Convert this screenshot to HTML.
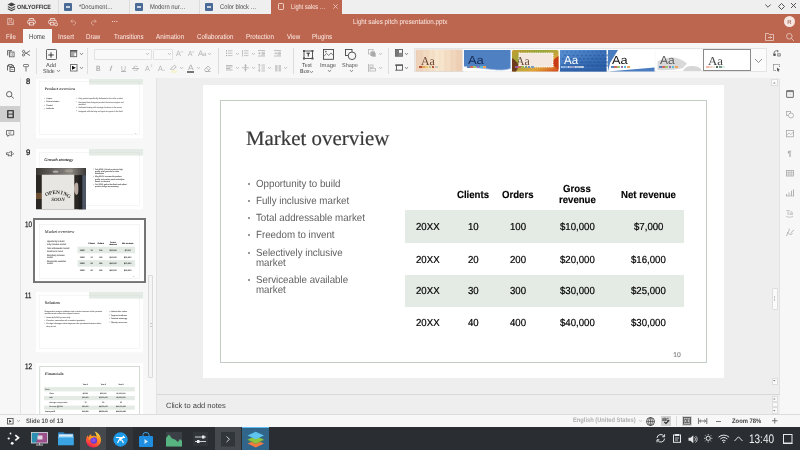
<!DOCTYPE html><html><head><meta charset="utf-8"><style>*{margin:0;padding:0;box-sizing:border-box}
html,body{width:800px;height:450px;overflow:hidden;background:#eee;font-family:"Liberation Sans",sans-serif;text-rendering:geometricPrecision}
.a{position:absolute}
.t{white-space:nowrap}
svg{position:absolute;overflow:visible}
.thumb .t{-webkit-text-stroke:0.4px currentColor}
</style></head><body><div class="a" style="left:0;top:0;width:800px;height:450px;will-change:transform;overflow:hidden">
<div class="a" style="left:0px;top:0px;width:800px;height:14px;background:#efefef"></div>
<div class="a" style="left:0px;top:14px;width:800px;height:29px;background:#bd664f"></div>
<div class="a" style="left:0px;top:43px;width:800px;height:35px;background:#f7f7f7"></div>
<div class="a" style="left:0px;top:78px;width:800px;height:1px;background:#e0e0e0"></div>
<div class="a" style="left:0px;top:78px;width:20px;height:336px;background:#f7f7f7"></div>
<div class="a" style="left:20px;top:79px;width:1px;height:335px;background:#e2e2e2"></div>
<div class="a" style="left:21px;top:78px;width:135px;height:336px;background:#f7f7f7"></div>
<div class="a" style="left:156px;top:79px;width:1px;height:335px;background:#e2e2e2"></div>
<div class="a" style="left:157px;top:78px;width:623px;height:316px;background:#eeeeee"></div>
<div class="a" style="left:780px;top:78px;width:20px;height:336px;background:#f7f7f7"></div>
<div class="a" style="left:779px;top:79px;width:1px;height:335px;background:#e2e2e2"></div>
<div class="a" style="left:157px;top:394px;width:623px;height:20px;background:#eeeeee"></div>
<div class="a" style="left:157px;top:394px;width:623px;height:1px;background:#d8d8d8"></div>
<div class="a" style="left:0px;top:414px;width:800px;height:13px;background:#f7f7f7"></div>
<div class="a" style="left:0px;top:414px;width:800px;height:1px;background:#dcdcdc"></div>
<div class="a" style="left:0px;top:427px;width:800px;height:23px;background:#2a2d31"></div>
<svg style="left:7px;top:2px;" width="9" height="10" viewBox="0 0 9 10"><path d="M4.5 0.5 L8.5 2.5 L4.5 4.5 L0.5 2.5Z" fill="#444"/><path d="M0.8 4.6 L4.5 6.4 L8.2 4.6" fill="none" stroke="#444" stroke-width="1.1"/><path d="M0.8 6.8 L4.5 8.6 L8.2 6.8" fill="none" stroke="#444" stroke-width="1.1"/></svg>
<div class="a t" style="left:16.50px;top:5.23px;font-size:6.2px;line-height:6.2px;font-family:'Liberation Sans',sans-serif;color:#333;font-weight:bold;transform:scaleX(0.863);transform-origin:0 0;">ONLYOFFICE</div>
<div class="a" style="left:58px;top:0px;width:1px;height:14px;background:#dcdcdc"></div>
<div class="a" style="left:64px;top:3px;width:8px;height:8px;background:#4a6b95;border-radius:1px"></div>
<div class="a" style="left:66px;top:5.6px;width:4px;height:0.8px;background:#c9d5e4"></div>
<div class="a" style="left:66px;top:7.4px;width:4px;height:0.8px;background:#c9d5e4"></div>
<div class="a t" style="left:78.50px;top:5.22px;font-size:6.8px;line-height:6.8px;font-family:'Liberation Sans',sans-serif;color:#4a4a4a;transform:scaleX(0.835);transform-origin:0 0;">*Document…</div>
<div class="a" style="left:129px;top:0px;width:1px;height:14px;background:#dcdcdc"></div>
<div class="a" style="left:135px;top:3px;width:8px;height:8px;background:#4a6b95;border-radius:1px"></div>
<div class="a" style="left:137px;top:5.6px;width:4px;height:0.8px;background:#c9d5e4"></div>
<div class="a" style="left:137px;top:7.4px;width:4px;height:0.8px;background:#c9d5e4"></div>
<div class="a t" style="left:149.50px;top:5.22px;font-size:6.8px;line-height:6.8px;font-family:'Liberation Sans',sans-serif;color:#4a4a4a;transform:scaleX(0.854);transform-origin:0 0;">Modern nur…</div>
<div class="a" style="left:199px;top:0px;width:1px;height:14px;background:#dcdcdc"></div>
<div class="a" style="left:205px;top:3px;width:8px;height:8px;background:#4a6b95;border-radius:1px"></div>
<div class="a" style="left:207px;top:5.6px;width:4px;height:0.8px;background:#c9d5e4"></div>
<div class="a" style="left:207px;top:7.4px;width:4px;height:0.8px;background:#c9d5e4"></div>
<div class="a t" style="left:219.50px;top:5.22px;font-size:6.8px;line-height:6.8px;font-family:'Liberation Sans',sans-serif;color:#4a4a4a;transform:scaleX(0.849);transform-origin:0 0;">Color block …</div>
<div class="a" style="left:271px;top:0px;width:71px;height:14px;background:#bd664f"></div>
<div class="a" style="left:277.6px;top:3.4px;width:6.6px;height:6.2px;border:0.8px solid #f0cfc6;border-radius:1.2px"></div>
<div class="a t" style="left:290.50px;top:5.22px;font-size:6.8px;line-height:6.8px;font-family:'Liberation Sans',sans-serif;color:#fbeae5;transform:scaleX(0.837);transform-origin:0 0;">Light sales …</div>
<svg style="left:332.5px;top:3.5px;" width="5" height="5" viewBox="0 0 5 5"><path d="M0.3 0.3L4.7 4.7M4.7 0.3L0.3 4.7" stroke="#f0cfc6" stroke-width="0.75"/></svg>
<svg style="left:765px;top:4px;" width="6" height="4" viewBox="0 0 6 4"><path d="M0.3 0.5L3 3.2L5.7 0.5" fill="none" stroke="#444" stroke-width="0.9"/></svg>
<svg style="left:778px;top:2.5px;" width="7" height="7" viewBox="0 0 7 7"><path d="M3.5 0.5L6.5 3.5L3.5 6.5L0.5 3.5Z" fill="none" stroke="#444" stroke-width="0.9"/></svg>
<svg style="left:791px;top:3px;" width="5" height="5" viewBox="0 0 5 5"><path d="M0 0L5 5M5 0L0 5" stroke="#444" stroke-width="0.9"/></svg>
<svg style="left:7px;top:18px;opacity:.45" width="7" height="7" viewBox="0 0 7 7"><path d="M0.5 0.5H5L6.5 2V6.5H0.5Z M2 0.5V2.3H4.5V0.5 M1.8 6.5V4H5.2V6.5" fill="none" stroke="#fff" stroke-width="0.9"/></svg>
<svg style="left:27px;top:18px;opacity:.8" width="9" height="7.5" viewBox="0 0 9 7.5"><path d="M2.3 2.3V0.5H6.7V2.3" fill="none" stroke="#fff" stroke-width="0.85"/><rect x="0.5" y="2.3" width="8" height="3.6" rx="1.7" fill="none" stroke="#fff" stroke-width="0.85"/><rect x="2.5" y="4.3" width="4" height="2.7" fill="#bd664f" stroke="#fff" stroke-width="0.85"/></svg>
<svg style="left:48px;top:18px;opacity:.8" width="10" height="8" viewBox="0 0 10 8"><path d="M2.3 2.3V0.5H6.7V2.3" fill="none" stroke="#fff" stroke-width="0.85"/><path d="M5.5 5.9H2Q0.5 5.9 0.5 4.3V3.9Q0.5 2.3 2 2.3H7Q8.5 2.3 8.5 3.9" fill="none" stroke="#fff" stroke-width="0.85"/><rect x="2.5" y="4.3" width="3.3" height="2.7" fill="#bd664f" stroke="#fff" stroke-width="0.85"/><circle cx="8" cy="6.3" r="1.5" fill="#bd664f" stroke="#fff" stroke-width="0.85"/></svg>
<svg style="left:70px;top:19px;opacity:.4" width="7" height="6" viewBox="0 0 7 6"><path d="M2.5 0.5L0.8 2.2L2.5 3.9 M0.8 2.2H4.5A2 2 0 0 1 4.5 5.8H3" fill="none" stroke="#fff" stroke-width="0.9"/></svg>
<svg style="left:90px;top:19px;opacity:.4" width="7" height="6" viewBox="0 0 7 6"><path d="M4.5 0.5L6.2 2.2L4.5 3.9 M6.2 2.2H2.5A2 2 0 0 0 2.5 5.8H4" fill="none" stroke="#fff" stroke-width="0.9"/></svg>
<div class="a" style="left:112px;top:20.8px;width:1.2px;height:1.2px;background:#f6ddd6;box-shadow:2.2px 0 0 #f6ddd6,4.4px 0 0 #f6ddd6"></div>
<div class="a t" style="left:352.70px;top:17.98px;font-size:7.2px;line-height:7.2px;font-family:'Liberation Sans',sans-serif;color:#fbeae5;transform:scaleX(0.868);transform-origin:0 0;">Light sales pitch presentation.pptx</div>
<div class="a" style="left:784px;top:16px;width:11px;height:11px;border-radius:50%;background:#f7e6e1"></div>
<div class="a t" style="left:787.33px;top:19.60px;font-size:6px;line-height:6px;font-family:'Liberation Sans',sans-serif;color:#8a4a3a;">R</div>
<div class="a" style="left:22.5px;top:29px;width:29.5px;height:14px;background:#f7f7f7"></div>
<div class="a t" style="left:6.30px;top:33.08px;font-size:7.2px;line-height:7.2px;font-family:'Liberation Sans',sans-serif;color:#fbeae5;transform:scaleX(0.853);transform-origin:0 0;">File</div>
<div class="a t" style="left:28.80px;top:33.08px;font-size:7.2px;line-height:7.2px;font-family:'Liberation Sans',sans-serif;color:#444;transform:scaleX(0.843);transform-origin:0 0;">Home</div>
<div class="a t" style="left:57.70px;top:33.08px;font-size:7.2px;line-height:7.2px;font-family:'Liberation Sans',sans-serif;color:#fbeae5;transform:scaleX(0.894);transform-origin:0 0;">Insert</div>
<div class="a t" style="left:85.80px;top:33.08px;font-size:7.2px;line-height:7.2px;font-family:'Liberation Sans',sans-serif;color:#fbeae5;transform:scaleX(0.851);transform-origin:0 0;">Draw</div>
<div class="a t" style="left:113.70px;top:33.08px;font-size:7.2px;line-height:7.2px;font-family:'Liberation Sans',sans-serif;color:#fbeae5;transform:scaleX(0.847);transform-origin:0 0;">Transitions</div>
<div class="a t" style="left:155.70px;top:33.08px;font-size:7.2px;line-height:7.2px;font-family:'Liberation Sans',sans-serif;color:#fbeae5;transform:scaleX(0.881);transform-origin:0 0;">Animation</div>
<div class="a t" style="left:196.70px;top:33.08px;font-size:7.2px;line-height:7.2px;font-family:'Liberation Sans',sans-serif;color:#fbeae5;transform:scaleX(0.860);transform-origin:0 0;">Collaboration</div>
<div class="a t" style="left:245.70px;top:33.08px;font-size:7.2px;line-height:7.2px;font-family:'Liberation Sans',sans-serif;color:#fbeae5;transform:scaleX(0.864);transform-origin:0 0;">Protection</div>
<div class="a t" style="left:286.50px;top:33.08px;font-size:7.2px;line-height:7.2px;font-family:'Liberation Sans',sans-serif;color:#fbeae5;transform:scaleX(0.853);transform-origin:0 0;">View</div>
<div class="a t" style="left:312.40px;top:33.08px;font-size:7.2px;line-height:7.2px;font-family:'Liberation Sans',sans-serif;color:#fbeae5;transform:scaleX(0.855);transform-origin:0 0;">Plugins</div>
<svg style="left:765px;top:32.5px;opacity:.6" width="9" height="8" viewBox="0 0 9 8"><path d="M0.5 0.5H3.5L4.3 1.5H8.5V7.5H0.5Z M3 4.5H6.5 M5.3 3.3L6.5 4.5L5.3 5.7" fill="none" stroke="#fff" stroke-width="0.9"/></svg>
<svg style="left:786px;top:32.5px;opacity:.6" width="9" height="8" viewBox="0 0 9 8"><circle cx="3.3" cy="3.3" r="2.8" fill="none" stroke="#fff" stroke-width="0.9"/><path d="M5.3 5.3L8 8" stroke="#fff" stroke-width="0.9"/></svg>
<svg style="left:7px;top:50px;" width="7.5" height="7.2" viewBox="0 0 7.5 7.2"><path d="M0.5 5.5V0.5H5" fill="none" stroke="#666" stroke-width="0.9"/><path d="M2 0.5V5.5M3.5 0.5V2" stroke="#888" stroke-width="0.6"/><rect x="2.5" y="2" width="4.6" height="4.8" fill="#f7f7f7" stroke="#666" stroke-width="0.9"/><path d="M4 2.3V6.6M5.5 2.3V6.6" stroke="#999" stroke-width="0.7"/></svg>
<svg style="left:22px;top:50.3px;" width="8.2" height="6.4" viewBox="0 0 8.2 6.4"><circle cx="1.5" cy="1.4" r="1.1" fill="none" stroke="#555" stroke-width="0.8"/><circle cx="1.5" cy="5" r="1.1" fill="none" stroke="#555" stroke-width="0.8"/><path d="M2.4 2.1L8 5.6M2.4 4.3L8 0.8" stroke="#555" stroke-width="0.8"/></svg>
<svg style="left:7px;top:64px;" width="8" height="8" viewBox="0 0 8 8"><path d="M5 1.5H6.5V3 M0.5 6.5V1.5H2" fill="none" stroke="#555" stroke-width="0.9"/><rect x="1.8" y="0.5" width="3.2" height="1.8" fill="none" stroke="#555" stroke-width="0.8"/><rect x="3" y="3.5" width="4.5" height="4" fill="none" stroke="#555" stroke-width="0.9"/><path d="M4 5.5H6.5" stroke="#888" stroke-width="0.8"/></svg>
<svg style="left:23px;top:64px;" width="6" height="7.5" viewBox="0 0 6 7.5"><rect x="0.5" y="0.5" width="5" height="2.2" rx="0.5" fill="none" stroke="#777" stroke-width="0.9"/><path d="M3 2.7V7.5" stroke="#777" stroke-width="1"/></svg>
<div class="a" style="left:36.4px;top:47.5px;width:1px;height:26.5px;background:#dedede"></div>
<div class="a" style="left:46px;top:49.3px;width:10.5px;height:10.5px;border:0.9px solid #666;border-radius:1.2px"></div>
<svg style="left:48.3px;top:51.6px;" width="6" height="6" viewBox="0 0 6 6"><path d="M3 0.3V5.7M0.3 3H5.7" stroke="#222" stroke-width="0.9"/></svg>
<div class="a t" style="left:46.20px;top:63.95px;font-size:5.7px;line-height:5.7px;font-family:'Liberation Sans',sans-serif;color:#444;transform:scaleX(0.986);transform-origin:0 0;">Add</div>
<div class="a t" style="left:43.00px;top:69.95px;font-size:5.7px;line-height:5.7px;font-family:'Liberation Sans',sans-serif;color:#444;transform:scaleX(0.931);transform-origin:0 0;">Slide</div>
<svg style="left:57.1px;top:70.3px;" width="3" height="1.8" viewBox="0 0 3 1.8"><path d="M0 0L1.5 1.8L3 0" fill="none" stroke="#777" stroke-width="0.8"/></svg>
<svg style="left:70px;top:50px;" width="7.2" height="7.2" viewBox="0 0 7.2 7.2"><rect x="0.5" y="0.5" width="6.2" height="6.2" fill="#a8a8a8" stroke="#6a6a6a" stroke-width="0.9"/><path d="M0 0.8H7.2" stroke="#555" stroke-width="1.4"/><rect x="4.3" y="3.2" width="1.8" height="2.8" fill="#fff"/></svg>
<svg style="left:80px;top:53px;" width="3" height="1.8" viewBox="0 0 3 1.8"><path d="M0 0L1.5 1.8L3 0" fill="none" stroke="#777" stroke-width="0.8"/></svg>
<svg style="left:70px;top:64px;" width="7.5" height="7.5" viewBox="0 0 7.5 7.5"><rect x="0.5" y="0.5" width="6.5" height="6.5" fill="#fff" stroke="#777" stroke-width="1"/><path d="M2 1.8L5.8 3.75L2 5.7Z" fill="#111"/></svg>
<svg style="left:80px;top:67px;" width="3" height="1.8" viewBox="0 0 3 1.8"><path d="M0 0L1.5 1.8L3 0" fill="none" stroke="#777" stroke-width="0.8"/></svg>
<div class="a" style="left:86.8px;top:47.5px;width:1px;height:26.5px;background:#dedede"></div>
<div class="a" style="left:93.5px;top:48.5px;width:58px;height:11px;border:1px solid #e2e2e2;background:#f9f9f9;border-radius:1px"></div>
<svg style="left:145.5px;top:53.3px;" width="3" height="1.8" viewBox="0 0 3 1.8"><path d="M0 0L1.5 1.8L3 0" fill="none" stroke="#bbb" stroke-width="0.8"/></svg>
<div class="a" style="left:152.5px;top:48.5px;width:20px;height:11px;border:1px solid #e2e2e2;background:#f9f9f9;border-radius:1px"></div>
<svg style="left:167.5px;top:53.3px;" width="3" height="1.8" viewBox="0 0 3 1.8"><path d="M0 0L1.5 1.8L3 0" fill="none" stroke="#bbb" stroke-width="0.8"/></svg>
<div class="a t" style="left:176.00px;top:49.93px;font-size:7.5px;line-height:7.5px;font-family:'Liberation Sans',sans-serif;color:#b5b5b5;transform:scaleX(0.960);transform-origin:0 0;">A</div>
<svg style="left:180.5px;top:50.5px;" width="2" height="2" viewBox="0 0 2 2"><path d="M0 1.5L1 0.3L2 1.5" fill="none" stroke="#b5b5b5" stroke-width="0.6"/></svg>
<div class="a t" style="left:187.80px;top:50.18px;font-size:7.2px;line-height:7.2px;font-family:'Liberation Sans',sans-serif;color:#b5b5b5;transform:scaleX(0.916);transform-origin:0 0;">A</div>
<svg style="left:191.5px;top:50.5px;" width="2" height="2" viewBox="0 0 2 2"><path d="M0 0.3L1 1.5L2 0.3" fill="none" stroke="#b5b5b5" stroke-width="0.6"/></svg>
<div class="a t" style="left:198.40px;top:49.70px;font-size:8px;line-height:8px;font-family:'Liberation Sans',sans-serif;color:#b5b5b5;transform:scaleX(0.993);transform-origin:0 0;">A</div>
<div class="a t" style="left:203.30px;top:52.00px;font-size:6px;line-height:6px;font-family:'Liberation Sans',sans-serif;color:#b5b5b5;transform:scaleX(1.019);transform-origin:0 0;">a</div>
<svg style="left:208.4px;top:53px;" width="3" height="1.8" viewBox="0 0 3 1.8"><path d="M0 0L1.5 1.8L3 0" fill="none" stroke="#bbb" stroke-width="0.8"/></svg>
<div class="a t" style="left:96.30px;top:65.04px;font-size:7.6px;line-height:7.6px;font-family:'Liberation Sans',sans-serif;color:#aaa;font-weight:bold;transform:scaleX(0.820);transform-origin:0 0;">B</div>
<div class="a t" style="left:109.30px;top:65.04px;font-size:7.6px;line-height:7.6px;font-family:'Liberation Sans',sans-serif;color:#b5b5b5;transform:scaleX(1.658);transform-origin:0 0;font-style:italic;">I</div>
<div class="a t" style="left:121.00px;top:64.78px;font-size:7.2px;line-height:7.2px;font-family:'Liberation Sans',sans-serif;color:#b5b5b5;transform:scaleX(0.962);transform-origin:0 0;">U</div>
<div class="a" style="left:121px;top:71px;width:5.2px;height:0.8px;background:#b5b5b5"></div>
<div class="a t" style="left:132.80px;top:65.04px;font-size:7.6px;line-height:7.6px;font-family:'Liberation Sans',sans-serif;color:#b5b5b5;transform:scaleX(0.986);transform-origin:0 0;">S</div>
<div class="a" style="left:132.3px;top:67.7px;width:6.8px;height:0.8px;background:#b5b5b5"></div>
<div class="a t" style="left:145.20px;top:65.04px;font-size:7.6px;line-height:7.6px;font-family:'Liberation Sans',sans-serif;color:#b5b5b5;transform:scaleX(0.947);transform-origin:0 0;">A</div>
<div class="a t" style="left:150.50px;top:65.03px;font-size:3.5px;line-height:3.5px;font-family:'Liberation Sans',sans-serif;color:#b5b5b5;">2</div>
<div class="a t" style="left:158.00px;top:65.04px;font-size:7.6px;line-height:7.6px;font-family:'Liberation Sans',sans-serif;color:#b5b5b5;transform:scaleX(0.947);transform-origin:0 0;">A</div>
<div class="a t" style="left:163.00px;top:69.03px;font-size:3.5px;line-height:3.5px;font-family:'Liberation Sans',sans-serif;color:#b5b5b5;">x</div>
<svg style="left:170px;top:64.5px;" width="7" height="5.5" viewBox="0 0 7 5.5"><path d="M1 5L0.8 3.5L4.5 0.3L6.3 1.8L2.8 5Z" fill="none" stroke="#aaa" stroke-width="0.8"/></svg>
<div class="a" style="left:170.5px;top:70px;width:6.7px;height:2.6px;background:#f4f3d2"></div>
<svg style="left:180.2px;top:67px;" width="3" height="1.8" viewBox="0 0 3 1.8"><path d="M0 0L1.5 1.8L3 0" fill="none" stroke="#bbb" stroke-width="0.8"/></svg>
<div class="a t" style="left:187.50px;top:63.83px;font-size:7.5px;line-height:7.5px;font-family:'Liberation Sans',sans-serif;color:#aaa;transform:scaleX(1.099);transform-origin:0 0;">A</div>
<div class="a" style="left:187px;top:71.1px;width:7.2px;height:1.5px;background:#777"></div>
<svg style="left:197.2px;top:67px;" width="3" height="1.8" viewBox="0 0 3 1.8"><path d="M0 0L1.5 1.8L3 0" fill="none" stroke="#bbb" stroke-width="0.8"/></svg>
<svg style="left:204px;top:64.5px;" width="7" height="6.5" viewBox="0 0 7 6.5"><path d="M0.5 4.5L4 1L6.5 3.5L3.5 6.5H1.5Z M2.5 3L5 5.5 M1.5 6.5H6.5" fill="none" stroke="#aaa" stroke-width="0.8"/></svg>
<div class="a" style="left:218.1px;top:47.5px;width:1px;height:26.5px;background:#dedede"></div>
<svg style="left:225.8px;top:50px;" width="6.5" height="6.5" viewBox="0 0 6.5 6.5"><circle cx="0.6" cy="0.8" r="0.6" fill="#999"/><circle cx="0.6" cy="3.2" r="0.6" fill="#999"/><circle cx="0.6" cy="5.6" r="0.6" fill="#999"/><path d="M2 0.8H6.5M2 3.2H6.5M2 5.6H6.5" stroke="#b5b5b5" stroke-width="0.8"/></svg>
<svg style="left:235.6px;top:53px;" width="3" height="1.8" viewBox="0 0 3 1.8"><path d="M0 0L1.5 1.8L3 0" fill="none" stroke="#bbb" stroke-width="0.8"/></svg>
<svg style="left:242px;top:50px;" width="6.5" height="6.5" viewBox="0 0 6.5 6.5"><path d="M0.5 0V6.5 M2 0.8H6.5M2 3.2H6.5M2 5.6H6.5" stroke="#b5b5b5" stroke-width="0.8"/></svg>
<svg style="left:252px;top:53px;" width="3" height="1.8" viewBox="0 0 3 1.8"><path d="M0 0L1.5 1.8L3 0" fill="none" stroke="#bbb" stroke-width="0.8"/></svg>
<svg style="left:258px;top:50px;" width="7" height="6.5" viewBox="0 0 7 6.5"><path d="M0 0.5H7M0 6H7M3.5 2.2H7M3.5 3.5H7M3.5 4.8H7M0.3 3.3H2.6M1.5 2.2V4.4" stroke="#b5b5b5" stroke-width="0.8"/></svg>
<svg style="left:274.3px;top:50px;" width="7" height="6.5" viewBox="0 0 7 6.5"><path d="M0 0.5H7M0 6H7M3.5 2.2H7M3.5 3.5H7M3.5 4.8H7M0.3 3.3H2.6M1.8 2.3L2.6 3.3L1.8 4.3" fill="none" stroke="#b5b5b5" stroke-width="0.8"/></svg>
<svg style="left:226px;top:65px;" width="6.5" height="6" viewBox="0 0 6.5 6"><path d="M0 0.5H6.5M0 2H6.5M0 3.5H4.5M0 5H6.5" stroke="#b5b5b5" stroke-width="0.9"/></svg>
<svg style="left:236px;top:67px;" width="3" height="1.8" viewBox="0 0 3 1.8"><path d="M0 0L1.5 1.8L3 0" fill="none" stroke="#bbb" stroke-width="0.8"/></svg>
<svg style="left:242px;top:64px;" width="7" height="7.5" viewBox="0 0 7 7.5"><path d="M3.5 0V7.5M0 3.75H7" stroke="#b5b5b5" stroke-width="0.9"/><path d="M2 2.3L3.5 1L5 2.3M2 5.2L3.5 6.5L5 5.2" fill="none" stroke="#b5b5b5" stroke-width="0.7"/></svg>
<svg style="left:252px;top:67px;" width="3" height="1.8" viewBox="0 0 3 1.8"><path d="M0 0L1.5 1.8L3 0" fill="none" stroke="#bbb" stroke-width="0.8"/></svg>
<svg style="left:258.3px;top:64px;" width="7" height="7.5" viewBox="0 0 7 7.5"><path d="M1.3 0V7.5 M0.2 1.2L1.3 0.3L2.4 1.2 M0.2 6.3L1.3 7.2L2.4 6.3 M3.5 1H7M3.5 3H7M3.5 5H7M3.5 7H7" fill="none" stroke="#b5b5b5" stroke-width="0.8"/></svg>
<svg style="left:268.2px;top:67px;" width="3" height="1.8" viewBox="0 0 3 1.8"><path d="M0 0L1.5 1.8L3 0" fill="none" stroke="#bbb" stroke-width="0.8"/></svg>
<svg style="left:275px;top:64.5px;" width="6" height="6.5" viewBox="0 0 6 6.5"><rect x="0" y="0" width="2.5" height="6.5" fill="#ccc"/><rect x="3.5" y="0" width="2.5" height="6.5" fill="#ccc"/></svg>
<svg style="left:284px;top:67px;" width="3" height="1.8" viewBox="0 0 3 1.8"><path d="M0 0L1.5 1.8L3 0" fill="none" stroke="#bbb" stroke-width="0.8"/></svg>
<div class="a" style="left:293.4px;top:47.5px;width:1px;height:26.5px;background:#dedede"></div>
<svg style="left:302.5px;top:50px;" width="10.5" height="9.5" viewBox="0 0 10.5 9.5"><rect x="1" y="1" width="8.5" height="7.5" fill="none" stroke="#444" stroke-width="0.9"/><rect x="0" y="0" width="2" height="2" fill="#555"/><rect x="8.5" y="0" width="2" height="2" fill="#555"/><rect x="0" y="7.5" width="2" height="2" fill="#555"/><rect x="8.5" y="7.5" width="2" height="2" fill="#555"/><path d="M3.6 3.2H6.9M5.25 3.2V6.5" stroke="#222" stroke-width="1"/></svg>
<div class="a t" style="left:302.20px;top:63.95px;font-size:5.7px;line-height:5.7px;font-family:'Liberation Sans',sans-serif;color:#444;transform:scaleX(0.937);transform-origin:0 0;">Text</div>
<div class="a t" style="left:300.00px;top:69.95px;font-size:5.7px;line-height:5.7px;font-family:'Liberation Sans',sans-serif;color:#444;transform:scaleX(0.967);transform-origin:0 0;">Box</div>
<svg style="left:310px;top:70.5px;" width="3" height="1.8" viewBox="0 0 3 1.8"><path d="M0 0L1.5 1.8L3 0" fill="none" stroke="#777" stroke-width="0.8"/></svg>
<svg style="left:323.2px;top:49.2px;" width="11" height="10.8" viewBox="0 0 11 10.8"><rect x="0.5" y="0.5" width="10" height="9.8" fill="none" stroke="#444" stroke-width="0.9"/><path d="M0.8 7.5L3.5 4.5L5.8 6.5L8 4L10.3 6.5" fill="none" stroke="#666" stroke-width="0.8"/><circle cx="2.8" cy="2.6" r="0.9" fill="#777"/></svg>
<div class="a t" style="left:319.80px;top:63.95px;font-size:5.7px;line-height:5.7px;font-family:'Liberation Sans',sans-serif;color:#555;transform:scaleX(1.023);transform-origin:0 0;">Image</div>
<svg style="left:327.5px;top:70.3px;" width="3" height="1.8" viewBox="0 0 3 1.8"><path d="M0 0L1.5 1.8L3 0" fill="none" stroke="#777" stroke-width="0.8"/></svg>
<svg style="left:345px;top:49.2px;" width="11.5" height="11" viewBox="0 0 11.5 11"><rect x="0.5" y="0.5" width="6.5" height="6" fill="none" stroke="#444" stroke-width="0.9"/><circle cx="7" cy="6.8" r="3.8" fill="#f7f7f7" stroke="#444" stroke-width="0.9"/></svg>
<div class="a t" style="left:342.10px;top:63.95px;font-size:5.7px;line-height:5.7px;font-family:'Liberation Sans',sans-serif;color:#555;transform:scaleX(0.971);transform-origin:0 0;">Shape</div>
<svg style="left:349.7px;top:70.3px;" width="3" height="1.8" viewBox="0 0 3 1.8"><path d="M0 0L1.5 1.8L3 0" fill="none" stroke="#777" stroke-width="0.8"/></svg>
<svg style="left:368px;top:49.3px;" width="8" height="8" viewBox="0 0 8 8"><rect x="0.5" y="0.5" width="4.5" height="4.5" fill="none" stroke="#b5b5b5" stroke-width="0.8"/><rect x="2.5" y="2.5" width="4.5" height="4.5" fill="#aaa"/><path d="M4 7.5H7.5V4" fill="none" stroke="#b5b5b5" stroke-width="0.8"/></svg>
<svg style="left:378.6px;top:53px;" width="3" height="1.8" viewBox="0 0 3 1.8"><path d="M0 0L1.5 1.8L3 0" fill="none" stroke="#bbb" stroke-width="0.8"/></svg>
<svg style="left:368px;top:64px;" width="8" height="8" viewBox="0 0 8 8"><path d="M0.5 0V8" stroke="#b5b5b5" stroke-width="0.9"/><rect x="2" y="1" width="3" height="2.5" fill="none" stroke="#b5b5b5" stroke-width="0.8"/><rect x="2" y="4.5" width="5.5" height="2.5" fill="none" stroke="#b5b5b5" stroke-width="0.8"/></svg>
<svg style="left:378.6px;top:67px;" width="3" height="1.8" viewBox="0 0 3 1.8"><path d="M0 0L1.5 1.8L3 0" fill="none" stroke="#bbb" stroke-width="0.8"/></svg>
<div class="a" style="left:387.9px;top:47.5px;width:1px;height:26.5px;background:#dedede"></div>
<svg style="left:395px;top:49.3px;" width="8" height="7.7" viewBox="0 0 8 7.7"><rect x="0.5" y="0.5" width="7" height="6.7" fill="none" stroke="#555" stroke-width="0.9"/><rect x="0.5" y="0.5" width="3.5" height="6.7" fill="#777"/><rect x="4" y="3.8" width="3.5" height="3.4" fill="#888"/></svg>
<svg style="left:405.4px;top:53px;" width="3" height="1.8" viewBox="0 0 3 1.8"><path d="M0 0L1.5 1.8L3 0" fill="none" stroke="#777" stroke-width="0.8"/></svg>
<svg style="left:395px;top:64.3px;" width="8" height="6.7" viewBox="0 0 8 6.7"><rect x="1.5" y="1" width="6" height="5.2" fill="none" stroke="#555" stroke-width="0.9"/><path d="M0 1.2H8" stroke="#555" stroke-width="1.2"/><path d="M1.5 6.2H0.3" stroke="#555" stroke-width="0.9"/></svg>
<svg style="left:405.4px;top:67px;" width="3" height="1.8" viewBox="0 0 3 1.8"><path d="M0 0L1.5 1.8L3 0" fill="none" stroke="#777" stroke-width="0.8"/></svg>
<div class="a" style="left:414px;top:48px;width:352.5px;height:24px;border:1px solid #e4e4e4;background:#fbfbfb"></div>
<div class="a" style="left:415.75px;top:49.5px;width:46.5px;height:21.5px;background:repeating-linear-gradient(90deg,#f2dcc5 0px,#f6e6d2 3px,#efd5bb 6px);box-shadow:0 0 0 0.5px #e3d3c3"></div>
<div class="a" style="left:415.75px;top:49.5px;width:46.5px;height:21.5px;background:linear-gradient(90deg,rgba(230,190,160,.5),rgba(255,245,215,.3) 50%,rgba(230,190,160,.6))"></div>
<div class="a t" style="left:420.75px;top:54.95px;font-size:12.2px;line-height:12.2px;font-family:'Liberation Serif',serif;color:#6a4535;transform:scaleX(0.970);transform-origin:0 0;">Aa</div>
<div class="a" style="left:418.65px;top:66px;width:19.200000000000003px;height:1.7px;background:linear-gradient(90deg,#b5533e 0.00px 2.70px,transparent 2.70px 3.20px,#e0a15a 3.20px 5.90px,transparent 5.90px 6.40px,#e9c96b 6.40px 9.10px,transparent 9.10px 9.60px,#b9c184 9.60px 12.30px,transparent 12.30px 12.80px,#b5533e 12.80px 15.50px,transparent 15.50px 16.00px,#c9c9c0 16.00px 18.70px,transparent 18.70px 19.20px)"></div>
<svg style="left:463.75px;top:49.5px;" width="46.5" height="21.5" viewBox="0 0 46.5 21.5"><rect width="46.5" height="21.5" fill="#fff"/><path d="M0 0H46.5V18.5C36 22.5 20 17.5 0 16.5Z" fill="#4f80c2"/><path d="M0 16.5C20 17.5 36 22.5 46.5 18.5" fill="none" stroke="#a9c2e4" stroke-width="0.8"/></svg>
<div class="a t" style="left:467.75px;top:55.17px;font-size:11.8px;line-height:11.8px;font-family:'Liberation Sans',sans-serif;color:#152a55;transform:scaleX(1.095);transform-origin:0 0;">Aa</div>
<div class="a" style="left:466.95px;top:66px;width:19.200000000000003px;height:1.7px;background:linear-gradient(90deg,#5b84bd 0.00px 2.70px,transparent 2.70px 3.20px,#d16b62 3.20px 5.90px,transparent 5.90px 6.40px,#9fc36b 6.40px 9.10px,transparent 9.10px 9.60px,#8f76b5 9.60px 12.30px,transparent 12.30px 12.80px,#5bbad0 12.80px 15.50px,transparent 15.50px 16.00px,#f1a35b 16.00px 18.70px,transparent 18.70px 19.20px)"></div>
<svg style="left:511.9px;top:49.5px;" width="46.5" height="21.5" viewBox="0 0 46.5 21.5"><defs><linearGradient id="g3" x1="0" y1="0" x2="1" y2="1"><stop offset="0" stop-color="#c59a2e"/><stop offset=".35" stop-color="#98a83c"/><stop offset=".7" stop-color="#e0a53a"/><stop offset="1" stop-color="#d2461b"/></linearGradient></defs><rect width="46.5" height="21.5" rx="1.5" fill="url(#g3)"/><path d="M0 21.5 L0 8 C6 12 8 16 4 21.5Z" fill="#6d3a1c"/><path d="M46.5 6 C40 10 38 14 46.5 19.5Z" fill="#c83a14"/><rect x="7" y="3" width="34" height="14" fill="#f3e7de" stroke="#fff" stroke-width="1.2" stroke-dasharray="1 0.8"/></svg>
<div class="a t" style="left:516.40px;top:54.95px;font-size:12.2px;line-height:12.2px;font-family:'Liberation Serif',serif;color:#6b4a35;transform:scaleX(0.970);transform-origin:0 0;">Aa</div>
<div class="a" style="left:514.9px;top:66px;width:19.200000000000003px;height:1.7px;background:linear-gradient(90deg,#9b5c9a 0.00px 2.70px,transparent 2.70px 3.20px,#d06a58 3.20px 5.90px,transparent 5.90px 6.40px,#9ab456 6.40px 9.10px,transparent 9.10px 9.60px,#6f9d8e 9.60px 12.30px,transparent 12.30px 12.80px,#6d8ec0 12.80px 15.50px,transparent 15.50px 16.00px,#7aa0c8 16.00px 18.70px,transparent 18.70px 19.20px)"></div>
<svg style="left:559.9px;top:49.5px;" width="46.5" height="21.5" viewBox="0 0 46.5 21.5"><defs><linearGradient id="g4" x1="0" y1="0" x2="1" y2="1"><stop offset="0" stop-color="#5a90d2"/><stop offset=".6" stop-color="#3a6fb8"/><stop offset="1" stop-color="#2c5ea6"/></linearGradient></defs><rect width="46.5" height="21.5" fill="url(#g4)"/><ellipse cx="3.0" cy="2.0" rx="0.90" ry="0.63" fill="#1f4f92" opacity=".45"/><ellipse cx="7.2" cy="2.0" rx="0.94" ry="0.66" fill="#1f4f92" opacity=".45"/><ellipse cx="11.4" cy="2.0" rx="0.98" ry="0.69" fill="#1f4f92" opacity=".45"/><ellipse cx="15.6" cy="2.0" rx="1.02" ry="0.71" fill="#1f4f92" opacity=".45"/><ellipse cx="19.8" cy="2.0" rx="1.06" ry="0.74" fill="#1f4f92" opacity=".45"/><ellipse cx="24.0" cy="2.0" rx="1.10" ry="0.77" fill="#1f4f92" opacity=".45"/><ellipse cx="28.2" cy="2.0" rx="1.14" ry="0.80" fill="#1f4f92" opacity=".45"/><ellipse cx="32.4" cy="2.0" rx="1.18" ry="0.83" fill="#1f4f92" opacity=".45"/><ellipse cx="36.6" cy="2.0" rx="1.22" ry="0.85" fill="#1f4f92" opacity=".45"/><ellipse cx="40.8" cy="2.0" rx="1.26" ry="0.88" fill="#1f4f92" opacity=".45"/><ellipse cx="45.0" cy="2.0" rx="1.30" ry="0.91" fill="#1f4f92" opacity=".45"/><ellipse cx="49.2" cy="2.0" rx="1.34" ry="0.94" fill="#1f4f92" opacity=".45"/><ellipse cx="5.1" cy="5.4" rx="1.15" ry="0.80" fill="#1f4f92" opacity=".45"/><ellipse cx="9.3" cy="5.4" rx="1.19" ry="0.83" fill="#1f4f92" opacity=".45"/><ellipse cx="13.5" cy="5.4" rx="1.23" ry="0.86" fill="#1f4f92" opacity=".45"/><ellipse cx="17.7" cy="5.4" rx="1.27" ry="0.89" fill="#1f4f92" opacity=".45"/><ellipse cx="21.9" cy="5.4" rx="1.31" ry="0.92" fill="#1f4f92" opacity=".45"/><ellipse cx="26.1" cy="5.4" rx="1.35" ry="0.94" fill="#1f4f92" opacity=".45"/><ellipse cx="30.3" cy="5.4" rx="1.39" ry="0.97" fill="#1f4f92" opacity=".45"/><ellipse cx="34.5" cy="5.4" rx="1.43" ry="1.00" fill="#1f4f92" opacity=".45"/><ellipse cx="38.7" cy="5.4" rx="1.47" ry="1.03" fill="#1f4f92" opacity=".45"/><ellipse cx="42.9" cy="5.4" rx="1.51" ry="1.06" fill="#1f4f92" opacity=".45"/><ellipse cx="47.1" cy="5.4" rx="1.55" ry="1.08" fill="#1f4f92" opacity=".45"/><ellipse cx="51.3" cy="5.4" rx="1.59" ry="1.11" fill="#1f4f92" opacity=".45"/><ellipse cx="3.0" cy="8.8" rx="1.40" ry="0.98" fill="#1f4f92" opacity=".45"/><ellipse cx="7.2" cy="8.8" rx="1.44" ry="1.01" fill="#1f4f92" opacity=".45"/><ellipse cx="11.4" cy="8.8" rx="1.48" ry="1.04" fill="#1f4f92" opacity=".45"/><ellipse cx="15.6" cy="8.8" rx="1.52" ry="1.06" fill="#1f4f92" opacity=".45"/><ellipse cx="19.8" cy="8.8" rx="1.56" ry="1.09" fill="#1f4f92" opacity=".45"/><ellipse cx="24.0" cy="8.8" rx="1.60" ry="1.12" fill="#1f4f92" opacity=".45"/><ellipse cx="28.2" cy="8.8" rx="1.64" ry="1.15" fill="#1f4f92" opacity=".45"/><ellipse cx="32.4" cy="8.8" rx="1.68" ry="1.18" fill="#1f4f92" opacity=".45"/><ellipse cx="36.6" cy="8.8" rx="1.72" ry="1.20" fill="#1f4f92" opacity=".45"/><ellipse cx="40.8" cy="8.8" rx="1.76" ry="1.23" fill="#1f4f92" opacity=".45"/><ellipse cx="45.0" cy="8.8" rx="1.80" ry="1.26" fill="#1f4f92" opacity=".45"/><ellipse cx="49.2" cy="8.8" rx="1.84" ry="1.29" fill="#1f4f92" opacity=".45"/><ellipse cx="5.1" cy="12.2" rx="1.65" ry="1.15" fill="#1f4f92" opacity=".45"/><ellipse cx="9.3" cy="12.2" rx="1.69" ry="1.18" fill="#1f4f92" opacity=".45"/><ellipse cx="13.5" cy="12.2" rx="1.73" ry="1.21" fill="#1f4f92" opacity=".45"/><ellipse cx="17.7" cy="12.2" rx="1.77" ry="1.24" fill="#1f4f92" opacity=".45"/><ellipse cx="21.9" cy="12.2" rx="1.81" ry="1.27" fill="#1f4f92" opacity=".45"/><ellipse cx="26.1" cy="12.2" rx="1.85" ry="1.29" fill="#1f4f92" opacity=".45"/><ellipse cx="30.3" cy="12.2" rx="1.89" ry="1.32" fill="#1f4f92" opacity=".45"/><ellipse cx="34.5" cy="12.2" rx="1.93" ry="1.35" fill="#1f4f92" opacity=".45"/><ellipse cx="38.7" cy="12.2" rx="1.97" ry="1.38" fill="#1f4f92" opacity=".45"/><ellipse cx="42.9" cy="12.2" rx="2.01" ry="1.41" fill="#1f4f92" opacity=".45"/><ellipse cx="47.1" cy="12.2" rx="2.05" ry="1.43" fill="#1f4f92" opacity=".45"/><ellipse cx="51.3" cy="12.2" rx="2.09" ry="1.46" fill="#1f4f92" opacity=".45"/><ellipse cx="3.0" cy="15.6" rx="1.90" ry="1.33" fill="#1f4f92" opacity=".45"/><ellipse cx="7.2" cy="15.6" rx="1.94" ry="1.36" fill="#1f4f92" opacity=".45"/><ellipse cx="11.4" cy="15.6" rx="1.98" ry="1.39" fill="#1f4f92" opacity=".45"/><ellipse cx="15.6" cy="15.6" rx="2.02" ry="1.41" fill="#1f4f92" opacity=".45"/><ellipse cx="19.8" cy="15.6" rx="2.06" ry="1.44" fill="#1f4f92" opacity=".45"/><ellipse cx="24.0" cy="15.6" rx="2.10" ry="1.47" fill="#1f4f92" opacity=".45"/><ellipse cx="28.2" cy="15.6" rx="2.14" ry="1.50" fill="#1f4f92" opacity=".45"/><ellipse cx="32.4" cy="15.6" rx="2.18" ry="1.53" fill="#1f4f92" opacity=".45"/><ellipse cx="36.6" cy="15.6" rx="2.22" ry="1.55" fill="#1f4f92" opacity=".45"/><ellipse cx="40.8" cy="15.6" rx="2.26" ry="1.58" fill="#1f4f92" opacity=".45"/><ellipse cx="45.0" cy="15.6" rx="2.30" ry="1.61" fill="#1f4f92" opacity=".45"/><ellipse cx="49.2" cy="15.6" rx="2.34" ry="1.64" fill="#1f4f92" opacity=".45"/><rect x="0" y="18.5" width="46.5" height="3" fill="#2a5aa0" opacity=".6"/></svg>
<div class="a t" style="left:563.90px;top:55.17px;font-size:11.8px;line-height:11.8px;font-family:'Liberation Sans',sans-serif;color:#ffffff;transform:scaleX(0.970);transform-origin:0 0;">Aa</div>
<div class="a" style="left:561.4px;top:65.8px;width:23px;height:2.6px;background:#c5d6ee;border-radius:1px"></div>
<div class="a" style="left:562.4px;top:66.3px;width:21.0px;height:1.6px;background:linear-gradient(90deg,#8eb0dc 0.00px 3.00px,transparent 3.00px 3.50px,#7aa0d8 3.50px 6.50px,transparent 6.50px 7.00px,#9aa8d0 7.00px 10.00px,transparent 10.00px 10.50px,#8f96c8 10.50px 13.50px,transparent 13.50px 14.00px,#a9c0d8 14.00px 17.00px,transparent 17.00px 17.50px,#b8c4dc 17.50px 20.50px,transparent 20.50px 21.00px)"></div>
<svg style="left:607.9px;top:49.5px;" width="46.5" height="21.5" viewBox="0 0 46.5 21.5"><rect width="46.5" height="21.5" fill="#fff"/><path d="M0 0H10L2 13 0 21.5Z" fill="#4a7cc0"/><path d="M0 21.5L46.5 17.5V21.5Z" fill="#4a7cc0"/></svg>
<div class="a t" style="left:612.10px;top:55.17px;font-size:11.8px;line-height:11.8px;font-family:'Liberation Sans',sans-serif;color:#111;transform:scaleX(1.081);transform-origin:0 0;">Aa</div>
<div class="a" style="left:610.9px;top:66px;width:19.200000000000003px;height:1.7px;background:linear-gradient(90deg,#5b84bd 0.00px 2.70px,transparent 2.70px 3.20px,#d16b62 3.20px 5.90px,transparent 5.90px 6.40px,#9fc36b 6.40px 9.10px,transparent 9.10px 9.60px,#8f76b5 9.60px 12.30px,transparent 12.30px 12.80px,#5bbad0 12.80px 15.50px,transparent 15.50px 16.00px,#f1a35b 16.00px 18.70px,transparent 18.70px 19.20px)"></div>
<svg style="left:655.75px;top:49.5px;" width="46.5" height="21.5" viewBox="0 0 46.5 21.5"><rect width="46.5" height="21.5" fill="#fff"/><path d="M1.5 11.5C6 9 12 7 18 7.5C23 8 27 10 31 13.5L27 18C20 20 10 20.5 1.5 20Z" fill="#d9d9d9"/><path d="M27 21C29 17 32 15.5 37 16C42 16.5 45 18 46 21Z" fill="#d6d6d6"/></svg>
<div class="a t" style="left:660.05px;top:55.17px;font-size:11.8px;line-height:11.8px;font-family:'Liberation Sans',sans-serif;color:#5a5a5a;transform:scaleX(1.018);transform-origin:0 0;">Aa</div>
<div class="a" style="left:658.55px;top:66px;width:19.200000000000003px;height:1.7px;background:linear-gradient(90deg,#5b84bd 0.00px 2.70px,transparent 2.70px 3.20px,#d16b62 3.20px 5.90px,transparent 5.90px 6.40px,#9fc36b 6.40px 9.10px,transparent 9.10px 9.60px,#8f76b5 9.60px 12.30px,transparent 12.30px 12.80px,#5bbad0 12.80px 15.50px,transparent 15.50px 16.00px,#f1a35b 16.00px 18.70px,transparent 18.70px 19.20px)"></div>
<div class="a" style="left:703px;top:49px;width:47.5px;height:22px;background:#fff;border:1px solid #8a8a8a"></div>
<div class="a t" style="left:708.00px;top:54.95px;font-size:12.2px;line-height:12.2px;font-family:'Liberation Serif',serif;color:#444;transform:scaleX(1.054);transform-origin:0 0;">Aa</div>
<div class="a" style="left:706px;top:66px;width:19.200000000000003px;height:1.7px;background:linear-gradient(90deg,#f0b8a8 0.00px 2.70px,transparent 2.70px 3.20px,#f3d4c8 3.20px 5.90px,transparent 5.90px 6.40px,#f5e6df 6.40px 9.10px,transparent 9.10px 9.60px,#4d6b5c 9.60px 12.30px,transparent 12.30px 12.80px,#7a9a88 12.80px 15.50px,transparent 15.50px 16.00px,#d8efe6 16.00px 18.70px,transparent 18.70px 19.20px)"></div>
<div class="a" style="left:750.5px;top:48px;width:16px;height:24px;background:#fbfbfb;border:1px solid #e4e4e4;border-left:none"></div>
<svg style="left:755px;top:59px;" width="7" height="3.5" viewBox="0 0 7 3.5"><path d="M0 0L3.5 3.5L7 0" fill="none" stroke="#777" stroke-width="0.8"/></svg>
<svg style="left:772.5px;top:50.4px;" width="7.5" height="6" viewBox="0 0 7.5 6"><path d="M1 3.5A2.5 2.5 0 0 1 5 1.2 M4.5 0.2L5.3 1.3L4.2 2" fill="none" stroke="#555" stroke-width="0.8"/><rect x="0.3" y="3.5" width="2.4" height="2.4" fill="#555"/><rect x="4.8" y="3.8" width="2.4" height="2.2" fill="none" stroke="#555" stroke-width="0.7"/></svg>
<svg style="left:772.5px;top:64px;" width="7.5" height="7.6" viewBox="0 0 7.5 7.6"><path d="M0.5 0.5H6.5V3 M0.5 0.5V6.5H3" fill="none" stroke="#666" stroke-width="0.8" stroke-dasharray="1.2 0.7"/><path d="M4 3.5L7 6L5.5 6.2L6.3 7.5L5.6 7.8L4.8 6.5L4 7.5Z" fill="#555"/></svg>
<div class="a" style="left:203px;top:85.2px;width:520.5px;height:292.4px"><div class="a" style="left:0px;top:0px;width:520.5px;height:292.4px;background:#fff"></div>
<div class="a" style="left:17px;top:15px;width:487px;height:262.7px;border:1px solid #c3cdc3"></div>
<div class="a" style="left:0;top:0.8px;width:520px;height:292px">
<div class="a t" style="left:43.40px;top:42.70px;font-size:20.6px;line-height:20.6px;font-family:'Liberation Serif',serif;color:#3a3a3a;transform:scaleX(1.015);transform-origin:0 0;-webkit-text-stroke:0.2px #3a3a3a;">Market overview</div>
<div class="a" style="left:45.1px;top:97.1px;width:2.1px;height:2.1px;background:#777;border-radius:50%"></div>
<div class="a t" style="left:53.10px;top:94.16px;font-size:10.4px;line-height:10.4px;font-family:'Liberation Sans',sans-serif;color:#606060;transform:scaleX(0.938);transform-origin:0 0;">Opportunity to build</div>
<div class="a" style="left:45.1px;top:114.3px;width:2.1px;height:2.1px;background:#777;border-radius:50%"></div>
<div class="a t" style="left:53.10px;top:111.36px;font-size:10.4px;line-height:10.4px;font-family:'Liberation Sans',sans-serif;color:#606060;transform:scaleX(0.938);transform-origin:0 0;">Fully inclusive market</div>
<div class="a" style="left:45.1px;top:130.8px;width:2.1px;height:2.1px;background:#777;border-radius:50%"></div>
<div class="a t" style="left:53.10px;top:127.86px;font-size:10.4px;line-height:10.4px;font-family:'Liberation Sans',sans-serif;color:#606060;transform:scaleX(0.938);transform-origin:0 0;">Total addressable market</div>
<div class="a" style="left:45.1px;top:147.8px;width:2.1px;height:2.1px;background:#777;border-radius:50%"></div>
<div class="a t" style="left:53.10px;top:144.86px;font-size:10.4px;line-height:10.4px;font-family:'Liberation Sans',sans-serif;color:#606060;transform:scaleX(0.938);transform-origin:0 0;">Freedom to invent</div>
<div class="a" style="left:45.1px;top:165.60000000000002px;width:2.1px;height:2.1px;background:#777;border-radius:50%"></div>
<div class="a t" style="left:53.10px;top:162.66px;font-size:10.4px;line-height:10.4px;font-family:'Liberation Sans',sans-serif;color:#606060;transform:scaleX(0.937);transform-origin:0 0;">Selectively inclusive</div>
<div class="a t" style="left:53.10px;top:172.86px;font-size:10.4px;line-height:10.4px;font-family:'Liberation Sans',sans-serif;color:#606060;transform:scaleX(0.937);transform-origin:0 0;">market</div>
<div class="a" style="left:45.1px;top:192.9px;width:2.1px;height:2.1px;background:#777;border-radius:50%"></div>
<div class="a t" style="left:53.10px;top:189.96px;font-size:10.4px;line-height:10.4px;font-family:'Liberation Sans',sans-serif;color:#606060;transform:scaleX(0.938);transform-origin:0 0;">Serviceable available</div>
<div class="a t" style="left:53.10px;top:200.16px;font-size:10.4px;line-height:10.4px;font-family:'Liberation Sans',sans-serif;color:#606060;transform:scaleX(0.937);transform-origin:0 0;">market</div>
<div class="a" style="left:202px;top:124.5px;width:279px;height:32.2px;background:#e4eae4"></div>
<div class="a" style="left:202px;top:188.75px;width:279px;height:32px;background:#e4eae4"></div>
<div class="a t" style="left:253.98px;top:104.93px;font-size:10.2px;line-height:10.2px;font-family:'Liberation Sans',sans-serif;color:#000;font-weight:bold;transform:scaleX(0.942);transform-origin:0 0;-webkit-text-stroke:0.15px #000;">Clients</div>
<div class="a t" style="left:299.45px;top:104.93px;font-size:10.2px;line-height:10.2px;font-family:'Liberation Sans',sans-serif;color:#000;font-weight:bold;transform:scaleX(0.942);transform-origin:0 0;-webkit-text-stroke:0.15px #000;">Orders</div>
<div class="a t" style="left:360.12px;top:98.93px;font-size:10.2px;line-height:10.2px;font-family:'Liberation Sans',sans-serif;color:#000;font-weight:bold;transform:scaleX(0.942);transform-origin:0 0;-webkit-text-stroke:0.15px #000;">Gross</div>
<div class="a t" style="left:355.57px;top:109.93px;font-size:10.2px;line-height:10.2px;font-family:'Liberation Sans',sans-serif;color:#000;font-weight:bold;transform:scaleX(0.942);transform-origin:0 0;-webkit-text-stroke:0.15px #000;">revenue</div>
<div class="a t" style="left:418.00px;top:104.93px;font-size:10.2px;line-height:10.2px;font-family:'Liberation Sans',sans-serif;color:#000;font-weight:bold;transform:scaleX(0.942);transform-origin:0 0;-webkit-text-stroke:0.15px #000;">Net revenue</div>
<div class="a t" style="left:212.81px;top:136.93px;font-size:10.2px;line-height:10.2px;font-family:'Liberation Sans',sans-serif;color:#000;transform:scaleX(0.945);transform-origin:0 0;-webkit-text-stroke:0.2px #000;">20XX</div>
<div class="a t" style="left:264.64px;top:136.93px;font-size:10.2px;line-height:10.2px;font-family:'Liberation Sans',sans-serif;color:#000;transform:scaleX(0.945);transform-origin:0 0;-webkit-text-stroke:0.2px #000;">10</div>
<div class="a t" style="left:307.36px;top:136.93px;font-size:10.2px;line-height:10.2px;font-family:'Liberation Sans',sans-serif;color:#000;transform:scaleX(0.945);transform-origin:0 0;-webkit-text-stroke:0.2px #000;">100</div>
<div class="a t" style="left:356.58px;top:136.93px;font-size:10.2px;line-height:10.2px;font-family:'Liberation Sans',sans-serif;color:#000;transform:scaleX(0.945);transform-origin:0 0;-webkit-text-stroke:0.2px #000;">$10,000</div>
<div class="a t" style="left:430.76px;top:136.93px;font-size:10.2px;line-height:10.2px;font-family:'Liberation Sans',sans-serif;color:#000;transform:scaleX(0.945);transform-origin:0 0;-webkit-text-stroke:0.2px #000;">$7,000</div>
<div class="a t" style="left:212.81px;top:169.73px;font-size:10.2px;line-height:10.2px;font-family:'Liberation Sans',sans-serif;color:#000;transform:scaleX(0.945);transform-origin:0 0;-webkit-text-stroke:0.2px #000;">20XX</div>
<div class="a t" style="left:264.64px;top:169.73px;font-size:10.2px;line-height:10.2px;font-family:'Liberation Sans',sans-serif;color:#000;transform:scaleX(0.945);transform-origin:0 0;-webkit-text-stroke:0.2px #000;">20</div>
<div class="a t" style="left:307.36px;top:169.73px;font-size:10.2px;line-height:10.2px;font-family:'Liberation Sans',sans-serif;color:#000;transform:scaleX(0.945);transform-origin:0 0;-webkit-text-stroke:0.2px #000;">200</div>
<div class="a t" style="left:356.58px;top:169.73px;font-size:10.2px;line-height:10.2px;font-family:'Liberation Sans',sans-serif;color:#000;transform:scaleX(0.945);transform-origin:0 0;-webkit-text-stroke:0.2px #000;">$20,000</div>
<div class="a t" style="left:428.08px;top:169.73px;font-size:10.2px;line-height:10.2px;font-family:'Liberation Sans',sans-serif;color:#000;transform:scaleX(0.945);transform-origin:0 0;-webkit-text-stroke:0.2px #000;">$16,000</div>
<div class="a t" style="left:212.81px;top:201.23px;font-size:10.2px;line-height:10.2px;font-family:'Liberation Sans',sans-serif;color:#000;transform:scaleX(0.945);transform-origin:0 0;-webkit-text-stroke:0.2px #000;">20XX</div>
<div class="a t" style="left:264.64px;top:201.23px;font-size:10.2px;line-height:10.2px;font-family:'Liberation Sans',sans-serif;color:#000;transform:scaleX(0.945);transform-origin:0 0;-webkit-text-stroke:0.2px #000;">30</div>
<div class="a t" style="left:307.36px;top:201.23px;font-size:10.2px;line-height:10.2px;font-family:'Liberation Sans',sans-serif;color:#000;transform:scaleX(0.945);transform-origin:0 0;-webkit-text-stroke:0.2px #000;">300</div>
<div class="a t" style="left:356.58px;top:201.23px;font-size:10.2px;line-height:10.2px;font-family:'Liberation Sans',sans-serif;color:#000;transform:scaleX(0.945);transform-origin:0 0;-webkit-text-stroke:0.2px #000;">$30,000</div>
<div class="a t" style="left:428.08px;top:201.23px;font-size:10.2px;line-height:10.2px;font-family:'Liberation Sans',sans-serif;color:#000;transform:scaleX(0.945);transform-origin:0 0;-webkit-text-stroke:0.2px #000;">$25,000</div>
<div class="a t" style="left:212.81px;top:233.43px;font-size:10.2px;line-height:10.2px;font-family:'Liberation Sans',sans-serif;color:#000;transform:scaleX(0.945);transform-origin:0 0;-webkit-text-stroke:0.2px #000;">20XX</div>
<div class="a t" style="left:264.64px;top:233.43px;font-size:10.2px;line-height:10.2px;font-family:'Liberation Sans',sans-serif;color:#000;transform:scaleX(0.945);transform-origin:0 0;-webkit-text-stroke:0.2px #000;">40</div>
<div class="a t" style="left:307.36px;top:233.43px;font-size:10.2px;line-height:10.2px;font-family:'Liberation Sans',sans-serif;color:#000;transform:scaleX(0.945);transform-origin:0 0;-webkit-text-stroke:0.2px #000;">400</div>
<div class="a t" style="left:356.58px;top:233.43px;font-size:10.2px;line-height:10.2px;font-family:'Liberation Sans',sans-serif;color:#000;transform:scaleX(0.945);transform-origin:0 0;-webkit-text-stroke:0.2px #000;">$40,000</div>
<div class="a t" style="left:428.08px;top:233.43px;font-size:10.2px;line-height:10.2px;font-family:'Liberation Sans',sans-serif;color:#000;transform:scaleX(0.945);transform-origin:0 0;-webkit-text-stroke:0.2px #000;">$30,000</div>
<div class="a t" style="left:470.22px;top:266.72px;font-size:6.8px;line-height:6.8px;font-family:'Liberation Sans',sans-serif;color:#888;-webkit-text-stroke:0.15px #888;">10</div>
</div></div>
<svg style="left:6px;top:90.6px;" width="8" height="7.5" viewBox="0 0 8 7.5"><circle cx="3.2" cy="3.2" r="2.7" fill="none" stroke="#555" stroke-width="0.9"/><path d="M5.2 5.2L7.8 7.5" stroke="#555" stroke-width="0.9"/></svg>
<div class="a" style="left:0px;top:105.7px;width:20px;height:16.1px;background:#cfcfcf"></div>
<svg style="left:7px;top:109.6px;" width="7" height="8.2" viewBox="0 0 7 8.2"><rect x="0" y="0" width="7" height="8.2" rx="0.8" fill="#444"/><rect x="1.5" y="1.3" width="4" height="2.3" fill="#cfcfcf"/><rect x="1.5" y="4.6" width="4" height="2.3" fill="#cfcfcf"/></svg>
<svg style="left:6px;top:130px;" width="8.2" height="7" viewBox="0 0 8.2 7"><path d="M0.5 0.5H7.7V5H3L1.8 6.5V5H0.5Z" fill="none" stroke="#555" stroke-width="0.8"/><path d="M2.3 2H5.8M2.3 3.4H4.8" stroke="#777" stroke-width="0.6"/></svg>
<svg style="left:6px;top:150.7px;" width="8.2" height="5.5" viewBox="0 0 8.2 5.5"><path d="M0.5 1.8H2.5L5.5 0.3V5.2L2.5 3.7H0.5Z" fill="none" stroke="#555" stroke-width="0.8"/><path d="M6.6 1.5A1.6 1.6 0 0 1 6.6 4" fill="none" stroke="#555" stroke-width="0.8"/><path d="M2.2 3.8L2.8 5.5" stroke="#555" stroke-width="0.8"/></svg>
<div class="a" style="left:21px;top:79px;width:135px;height:335px;overflow:hidden">
<div class="a" style="left:15px;top:-1.4000000000000057px;width:520px;height:292.5px;transform:scale(0.20577);transform-origin:0 0"><div class="a thumb" style="left:0;top:0;width:520px;height:292.5px"><div class="a" style="left:0px;top:0px;width:520px;height:292.5px;background:#fff"></div>
<div class="a" style="left:258px;top:0px;width:262px;height:32px;background:#e4eae4"></div>
<div class="a" style="left:17px;top:14.5px;width:487px;height:262px;border:1px solid #c9d5c9"></div>
<div class="a t" style="left:42.00px;top:43.74px;font-size:19px;line-height:19px;font-family:'Liberation Serif',serif;color:#222;transform:scaleX(1.115);transform-origin:0 0;-webkit-text-stroke:0.3px #222;">Product overview</div>
<div class="a" style="left:40px;top:97px;width:4px;height:4px;background:#777;border-radius:50%"></div>
<div class="a t" style="left:50.00px;top:95.05px;font-size:9px;line-height:9px;font-family:'Liberation Sans',sans-serif;color:#666;">Unique</div>
<div class="a" style="left:40px;top:114px;width:4px;height:4px;background:#777;border-radius:50%"></div>
<div class="a t" style="left:50.00px;top:112.05px;font-size:9px;line-height:9px;font-family:'Liberation Sans',sans-serif;color:#666;">Point of relation</div>
<div class="a" style="left:40px;top:131px;width:4px;height:4px;background:#777;border-radius:50%"></div>
<div class="a t" style="left:50.00px;top:129.05px;font-size:9px;line-height:9px;font-family:'Liberation Sans',sans-serif;color:#666;">Trusted</div>
<div class="a" style="left:40px;top:148px;width:4px;height:4px;background:#777;border-radius:50%"></div>
<div class="a t" style="left:50.00px;top:146.05px;font-size:9px;line-height:9px;font-family:'Liberation Sans',sans-serif;color:#666;">Authentic</div>
<div class="a" style="left:196px;top:97px;width:4px;height:4px;background:#777;border-radius:50%"></div>
<div class="a t" style="left:206.00px;top:94.71px;font-size:9.4px;line-height:9.4px;font-family:'Liberation Sans',sans-serif;color:#777;transform:scaleX(0.950);transform-origin:0 0;">Only product specifically dedicated to the niche market</div>
<div class="a" style="left:196px;top:114px;width:4px;height:4px;background:#777;border-radius:50%"></div>
<div class="a t" style="left:206.00px;top:111.71px;font-size:9.4px;line-height:9.4px;font-family:'Liberation Sans',sans-serif;color:#777;transform:scaleX(0.950);transform-origin:0 0;">Disrupted data designed product that covers region and</div>
<div class="a t" style="left:206.00px;top:122.71px;font-size:9.4px;line-height:9.4px;font-family:'Liberation Sans',sans-serif;color:#777;transform:scaleX(0.950);transform-origin:0 0;">standard</div>
<div class="a" style="left:196px;top:140px;width:4px;height:4px;background:#777;border-radius:50%"></div>
<div class="a t" style="left:206.00px;top:137.71px;font-size:9.4px;line-height:9.4px;font-family:'Liberation Sans',sans-serif;color:#777;transform:scaleX(0.950);transform-origin:0 0;">Dedicated testing with strategic locations in the areas</div>
<div class="a" style="left:196px;top:157px;width:4px;height:4px;background:#777;border-radius:50%"></div>
<div class="a t" style="left:206.00px;top:154.71px;font-size:9.4px;line-height:9.4px;font-family:'Liberation Sans',sans-serif;color:#777;transform:scaleX(0.950);transform-origin:0 0;">Designed with the help and input of experts in the field</div>
<div class="a t" style="left:484.00px;top:265.60px;font-size:6px;line-height:6px;font-family:'Liberation Sans',sans-serif;color:#999;">8</div></div></div>
<div class="a" style="left:15px;top:70px;width:520px;height:292.5px;transform:scale(0.20577);transform-origin:0 0"><div class="a thumb" style="left:0;top:0;width:520px;height:292.5px"><div class="a" style="left:0px;top:0px;width:520px;height:292.5px;background:#fff"></div>
<div class="a" style="left:258px;top:0px;width:262px;height:32px;background:#e4eae4"></div>
<div class="a" style="left:17px;top:14.5px;width:487px;height:262px;border:1px solid #c9d5c9"></div>
<div class="a t" style="left:40.00px;top:42.74px;font-size:19px;line-height:19px;font-family:'Liberation Serif',serif;color:#222;transform:scaleX(1.139);transform-origin:0 0;font-style:italic;-webkit-text-stroke:0.4px #222;">Growth strategy</div>
<div class="a" style="left:277px;top:95px;width:4px;height:4px;background:#777;border-radius:50%"></div>
<div class="a t" style="left:287.00px;top:92.62px;font-size:9.5px;line-height:9.5px;font-family:'Liberation Sans',sans-serif;color:#555;transform:scaleX(0.950);transform-origin:0 0;">Feb 20XX: Unlock product to high</div>
<div class="a t" style="left:287.00px;top:103.62px;font-size:9.5px;line-height:9.5px;font-family:'Liberation Sans',sans-serif;color:#555;transform:scaleX(0.950);transform-origin:0 0;">profile retail partners for wide</div>
<div class="a t" style="left:287.00px;top:114.62px;font-size:9.5px;line-height:9.5px;font-family:'Liberation Sans',sans-serif;color:#555;transform:scaleX(0.950);transform-origin:0 0;">distribution</div>
<div class="a" style="left:277px;top:133px;width:4px;height:4px;background:#777;border-radius:50%"></div>
<div class="a t" style="left:287.00px;top:130.62px;font-size:9.5px;line-height:9.5px;font-family:'Liberation Sans',sans-serif;color:#555;transform:scaleX(0.950);transform-origin:0 0;">May 20XX: increase the product</div>
<div class="a t" style="left:287.00px;top:141.62px;font-size:9.5px;line-height:9.5px;font-family:'Liberation Sans',sans-serif;color:#555;transform:scaleX(0.950);transform-origin:0 0;">profile and market reach and adjust</div>
<div class="a t" style="left:287.00px;top:152.62px;font-size:9.5px;line-height:9.5px;font-family:'Liberation Sans',sans-serif;color:#555;transform:scaleX(0.950);transform-origin:0 0;">based on demand</div>
<div class="a" style="left:277px;top:171px;width:4px;height:4px;background:#777;border-radius:50%"></div>
<div class="a t" style="left:287.00px;top:168.62px;font-size:9.5px;line-height:9.5px;font-family:'Liberation Sans',sans-serif;color:#555;transform:scaleX(0.950);transform-origin:0 0;">Oct 20XX: gather feedback and adjust</div>
<div class="a t" style="left:287.00px;top:179.62px;font-size:9.5px;line-height:9.5px;font-family:'Liberation Sans',sans-serif;color:#555;transform:scaleX(0.950);transform-origin:0 0;">product design as necessary</div>
<svg style="left:0px;top:92.5px;" width="243" height="200" viewBox="0 0 243 200"><defs><linearGradient id="tb9" x1="0" y1="0" x2="1" y2="0"><stop offset="0" stop-color="#3a3632"/><stop offset=".4" stop-color="#6d6a66"/><stop offset=".7" stop-color="#8a8680"/><stop offset="1" stop-color="#3c3a38"/></linearGradient></defs><rect width="243" height="200" fill="#2a2622"/><rect x="0" y="0" width="243" height="34" fill="url(#tb9)"/><ellipse cx="95" cy="17" rx="14" ry="6" fill="#d8d8d8" opacity=".6"/><ellipse cx="160" cy="14" rx="20" ry="7" fill="#b8b0a8" opacity=".5"/><rect x="0" y="120" width="28" height="30" fill="#8a6038" opacity=".7"/><ellipse cx="197" cy="100" rx="12" ry="30" fill="#b8aaa0"/><rect x="206" y="34" width="20" height="166" fill="#1e1e20"/><rect x="225" y="34" width="18" height="166" fill="#4e5666"/><rect x="28" y="32" width="158" height="168" fill="#e7e6e3"/><text x="58.5 73.9 90.2 107.0 123.8 140.1 155.5" y="137.5 130.6 126.4 125.0 126.4 130.6 137.5" rotate="-29 -19 -10 0 10 19 29" font-family="Liberation Serif" font-size="26" font-weight="bold" fill="#2e2e2e" text-anchor="middle">OPENING</text><text x="107" y="158" font-family="Liberation Serif" font-size="24" font-weight="bold" font-style="italic" text-anchor="middle" fill="#2e2e2e">SOON</text></svg></div></div>
<div class="a" style="left:12px;top:138.5px;width:113px;height:65.4px;border:2px solid #757575;background:#fff"></div>
<div class="a" style="left:15px;top:141.6px;width:520px;height:292.5px;transform:scale(0.20577);transform-origin:0 0"><div class="a thumb" style="left:0;top:0;width:520px;height:292.5px"><div class="a" style="left:0px;top:0px;width:520.5px;height:292.4px;background:#fff"></div>
<div class="a" style="left:17px;top:15px;width:487px;height:262.7px;border:1px solid #c3cdc3"></div>
<div class="a" style="left:0;top:0.8px;width:520px;height:292px">
<div class="a t" style="left:43.40px;top:42.70px;font-size:20.6px;line-height:20.6px;font-family:'Liberation Serif',serif;color:#3a3a3a;transform:scaleX(1.015);transform-origin:0 0;-webkit-text-stroke:0.2px #3a3a3a;">Market overview</div>
<div class="a" style="left:45.1px;top:97.1px;width:2.1px;height:2.1px;background:#777;border-radius:50%"></div>
<div class="a t" style="left:53.10px;top:94.16px;font-size:10.4px;line-height:10.4px;font-family:'Liberation Sans',sans-serif;color:#606060;transform:scaleX(0.938);transform-origin:0 0;">Opportunity to build</div>
<div class="a" style="left:45.1px;top:114.3px;width:2.1px;height:2.1px;background:#777;border-radius:50%"></div>
<div class="a t" style="left:53.10px;top:111.36px;font-size:10.4px;line-height:10.4px;font-family:'Liberation Sans',sans-serif;color:#606060;transform:scaleX(0.938);transform-origin:0 0;">Fully inclusive market</div>
<div class="a" style="left:45.1px;top:130.8px;width:2.1px;height:2.1px;background:#777;border-radius:50%"></div>
<div class="a t" style="left:53.10px;top:127.86px;font-size:10.4px;line-height:10.4px;font-family:'Liberation Sans',sans-serif;color:#606060;transform:scaleX(0.938);transform-origin:0 0;">Total addressable market</div>
<div class="a" style="left:45.1px;top:147.8px;width:2.1px;height:2.1px;background:#777;border-radius:50%"></div>
<div class="a t" style="left:53.10px;top:144.86px;font-size:10.4px;line-height:10.4px;font-family:'Liberation Sans',sans-serif;color:#606060;transform:scaleX(0.938);transform-origin:0 0;">Freedom to invent</div>
<div class="a" style="left:45.1px;top:165.60000000000002px;width:2.1px;height:2.1px;background:#777;border-radius:50%"></div>
<div class="a t" style="left:53.10px;top:162.66px;font-size:10.4px;line-height:10.4px;font-family:'Liberation Sans',sans-serif;color:#606060;transform:scaleX(0.937);transform-origin:0 0;">Selectively inclusive</div>
<div class="a t" style="left:53.10px;top:172.86px;font-size:10.4px;line-height:10.4px;font-family:'Liberation Sans',sans-serif;color:#606060;transform:scaleX(0.937);transform-origin:0 0;">market</div>
<div class="a" style="left:45.1px;top:192.9px;width:2.1px;height:2.1px;background:#777;border-radius:50%"></div>
<div class="a t" style="left:53.10px;top:189.96px;font-size:10.4px;line-height:10.4px;font-family:'Liberation Sans',sans-serif;color:#606060;transform:scaleX(0.938);transform-origin:0 0;">Serviceable available</div>
<div class="a t" style="left:53.10px;top:200.16px;font-size:10.4px;line-height:10.4px;font-family:'Liberation Sans',sans-serif;color:#606060;transform:scaleX(0.937);transform-origin:0 0;">market</div>
<div class="a" style="left:202px;top:124.5px;width:279px;height:32.2px;background:#e4eae4"></div>
<div class="a" style="left:202px;top:188.75px;width:279px;height:32px;background:#e4eae4"></div>
<div class="a t" style="left:253.98px;top:104.93px;font-size:10.2px;line-height:10.2px;font-family:'Liberation Sans',sans-serif;color:#000;font-weight:bold;transform:scaleX(0.942);transform-origin:0 0;-webkit-text-stroke:0.15px #000;">Clients</div>
<div class="a t" style="left:299.45px;top:104.93px;font-size:10.2px;line-height:10.2px;font-family:'Liberation Sans',sans-serif;color:#000;font-weight:bold;transform:scaleX(0.942);transform-origin:0 0;-webkit-text-stroke:0.15px #000;">Orders</div>
<div class="a t" style="left:360.12px;top:98.93px;font-size:10.2px;line-height:10.2px;font-family:'Liberation Sans',sans-serif;color:#000;font-weight:bold;transform:scaleX(0.942);transform-origin:0 0;-webkit-text-stroke:0.15px #000;">Gross</div>
<div class="a t" style="left:355.57px;top:109.93px;font-size:10.2px;line-height:10.2px;font-family:'Liberation Sans',sans-serif;color:#000;font-weight:bold;transform:scaleX(0.942);transform-origin:0 0;-webkit-text-stroke:0.15px #000;">revenue</div>
<div class="a t" style="left:418.00px;top:104.93px;font-size:10.2px;line-height:10.2px;font-family:'Liberation Sans',sans-serif;color:#000;font-weight:bold;transform:scaleX(0.942);transform-origin:0 0;-webkit-text-stroke:0.15px #000;">Net revenue</div>
<div class="a t" style="left:212.81px;top:136.93px;font-size:10.2px;line-height:10.2px;font-family:'Liberation Sans',sans-serif;color:#000;transform:scaleX(0.945);transform-origin:0 0;-webkit-text-stroke:0.2px #000;">20XX</div>
<div class="a t" style="left:264.64px;top:136.93px;font-size:10.2px;line-height:10.2px;font-family:'Liberation Sans',sans-serif;color:#000;transform:scaleX(0.945);transform-origin:0 0;-webkit-text-stroke:0.2px #000;">10</div>
<div class="a t" style="left:307.36px;top:136.93px;font-size:10.2px;line-height:10.2px;font-family:'Liberation Sans',sans-serif;color:#000;transform:scaleX(0.945);transform-origin:0 0;-webkit-text-stroke:0.2px #000;">100</div>
<div class="a t" style="left:356.58px;top:136.93px;font-size:10.2px;line-height:10.2px;font-family:'Liberation Sans',sans-serif;color:#000;transform:scaleX(0.945);transform-origin:0 0;-webkit-text-stroke:0.2px #000;">$10,000</div>
<div class="a t" style="left:430.76px;top:136.93px;font-size:10.2px;line-height:10.2px;font-family:'Liberation Sans',sans-serif;color:#000;transform:scaleX(0.945);transform-origin:0 0;-webkit-text-stroke:0.2px #000;">$7,000</div>
<div class="a t" style="left:212.81px;top:169.73px;font-size:10.2px;line-height:10.2px;font-family:'Liberation Sans',sans-serif;color:#000;transform:scaleX(0.945);transform-origin:0 0;-webkit-text-stroke:0.2px #000;">20XX</div>
<div class="a t" style="left:264.64px;top:169.73px;font-size:10.2px;line-height:10.2px;font-family:'Liberation Sans',sans-serif;color:#000;transform:scaleX(0.945);transform-origin:0 0;-webkit-text-stroke:0.2px #000;">20</div>
<div class="a t" style="left:307.36px;top:169.73px;font-size:10.2px;line-height:10.2px;font-family:'Liberation Sans',sans-serif;color:#000;transform:scaleX(0.945);transform-origin:0 0;-webkit-text-stroke:0.2px #000;">200</div>
<div class="a t" style="left:356.58px;top:169.73px;font-size:10.2px;line-height:10.2px;font-family:'Liberation Sans',sans-serif;color:#000;transform:scaleX(0.945);transform-origin:0 0;-webkit-text-stroke:0.2px #000;">$20,000</div>
<div class="a t" style="left:428.08px;top:169.73px;font-size:10.2px;line-height:10.2px;font-family:'Liberation Sans',sans-serif;color:#000;transform:scaleX(0.945);transform-origin:0 0;-webkit-text-stroke:0.2px #000;">$16,000</div>
<div class="a t" style="left:212.81px;top:201.23px;font-size:10.2px;line-height:10.2px;font-family:'Liberation Sans',sans-serif;color:#000;transform:scaleX(0.945);transform-origin:0 0;-webkit-text-stroke:0.2px #000;">20XX</div>
<div class="a t" style="left:264.64px;top:201.23px;font-size:10.2px;line-height:10.2px;font-family:'Liberation Sans',sans-serif;color:#000;transform:scaleX(0.945);transform-origin:0 0;-webkit-text-stroke:0.2px #000;">30</div>
<div class="a t" style="left:307.36px;top:201.23px;font-size:10.2px;line-height:10.2px;font-family:'Liberation Sans',sans-serif;color:#000;transform:scaleX(0.945);transform-origin:0 0;-webkit-text-stroke:0.2px #000;">300</div>
<div class="a t" style="left:356.58px;top:201.23px;font-size:10.2px;line-height:10.2px;font-family:'Liberation Sans',sans-serif;color:#000;transform:scaleX(0.945);transform-origin:0 0;-webkit-text-stroke:0.2px #000;">$30,000</div>
<div class="a t" style="left:428.08px;top:201.23px;font-size:10.2px;line-height:10.2px;font-family:'Liberation Sans',sans-serif;color:#000;transform:scaleX(0.945);transform-origin:0 0;-webkit-text-stroke:0.2px #000;">$25,000</div>
<div class="a t" style="left:212.81px;top:233.43px;font-size:10.2px;line-height:10.2px;font-family:'Liberation Sans',sans-serif;color:#000;transform:scaleX(0.945);transform-origin:0 0;-webkit-text-stroke:0.2px #000;">20XX</div>
<div class="a t" style="left:264.64px;top:233.43px;font-size:10.2px;line-height:10.2px;font-family:'Liberation Sans',sans-serif;color:#000;transform:scaleX(0.945);transform-origin:0 0;-webkit-text-stroke:0.2px #000;">40</div>
<div class="a t" style="left:307.36px;top:233.43px;font-size:10.2px;line-height:10.2px;font-family:'Liberation Sans',sans-serif;color:#000;transform:scaleX(0.945);transform-origin:0 0;-webkit-text-stroke:0.2px #000;">400</div>
<div class="a t" style="left:356.58px;top:233.43px;font-size:10.2px;line-height:10.2px;font-family:'Liberation Sans',sans-serif;color:#000;transform:scaleX(0.945);transform-origin:0 0;-webkit-text-stroke:0.2px #000;">$40,000</div>
<div class="a t" style="left:428.08px;top:233.43px;font-size:10.2px;line-height:10.2px;font-family:'Liberation Sans',sans-serif;color:#000;transform:scaleX(0.945);transform-origin:0 0;-webkit-text-stroke:0.2px #000;">$30,000</div>
<div class="a t" style="left:470.22px;top:266.72px;font-size:6.8px;line-height:6.8px;font-family:'Liberation Sans',sans-serif;color:#888;-webkit-text-stroke:0.15px #888;">10</div>
</div></div></div>
<div class="a" style="left:15px;top:212.8px;width:520px;height:292.5px;transform:scale(0.20577);transform-origin:0 0"><div class="a thumb" style="left:0;top:0;width:520px;height:292.5px"><div class="a" style="left:0px;top:0px;width:520px;height:292.5px;background:#fff"></div>
<div class="a" style="left:258px;top:0px;width:262px;height:32px;background:#e4eae4"></div>
<div class="a" style="left:17px;top:14.5px;width:487px;height:262px;border:1px solid #c9d5c9"></div>
<div class="a t" style="left:42.00px;top:40.74px;font-size:19px;line-height:19px;font-family:'Liberation Serif',serif;color:#333;transform:scaleX(1.149);transform-origin:0 0;">Solution</div>
<div class="a t" style="left:41.00px;top:91.48px;font-size:8.5px;line-height:8.5px;font-family:'Liberation Sans',sans-serif;color:#666;transform:scaleX(1.133);transform-origin:0 0;">Comparable market solutions lack certain elements of the product</div>
<div class="a t" style="left:41.00px;top:102.48px;font-size:8.5px;line-height:8.5px;font-family:'Liberation Sans',sans-serif;color:#666;transform:scaleX(1.085);transform-origin:0 0;">and this market offers the unique features</div>
<div class="a" style="left:41px;top:120px;width:4px;height:4px;background:#777;border-radius:50%"></div>
<div class="a t" style="left:51.00px;top:118.48px;font-size:8.5px;line-height:8.5px;font-family:'Liberation Sans',sans-serif;color:#666;transform:scaleX(1.288);transform-origin:0 0;">Item A (10XX years old)</div>
<div class="a" style="left:41px;top:136px;width:4px;height:4px;background:#777;border-radius:50%"></div>
<div class="a t" style="left:51.00px;top:134.47px;font-size:8.5px;line-height:8.5px;font-family:'Liberation Sans',sans-serif;color:#666;transform:scaleX(1.297);transform-origin:0 0;">Precise execution of a market product</div>
<div class="a" style="left:41px;top:152px;width:4px;height:4px;background:#777;border-radius:50%"></div>
<div class="a t" style="left:51.00px;top:150.47px;font-size:8.5px;line-height:8.5px;font-family:'Liberation Sans',sans-serif;color:#666;transform:scaleX(1.295);transform-origin:0 0;">Design changes that improve the product features that</div>
<div class="a t" style="left:51.00px;top:161.47px;font-size:8.5px;line-height:8.5px;font-family:'Liberation Sans',sans-serif;color:#666;transform:scaleX(1.205);transform-origin:0 0;">they need</div>
<div class="a" style="left:354px;top:93px;width:4px;height:4px;background:#777;border-radius:50%"></div>
<div class="a t" style="left:363.00px;top:91.48px;font-size:8.5px;line-height:8.5px;font-family:'Liberation Sans',sans-serif;color:#555;transform:scaleX(1.273);transform-origin:0 0;">Unlock the value</div>
<div class="a" style="left:354px;top:110px;width:4px;height:4px;background:#777;border-radius:50%"></div>
<div class="a t" style="left:363.00px;top:108.48px;font-size:8.5px;line-height:8.5px;font-family:'Liberation Sans',sans-serif;color:#555;transform:scaleX(1.144);transform-origin:0 0;">Targeted audience</div>
<div class="a" style="left:354px;top:127px;width:4px;height:4px;background:#777;border-radius:50%"></div>
<div class="a t" style="left:363.00px;top:125.48px;font-size:8.5px;line-height:8.5px;font-family:'Liberation Sans',sans-serif;color:#555;transform:scaleX(1.309);transform-origin:0 0;">Trusted strategy</div>
<div class="a" style="left:354px;top:144px;width:4px;height:4px;background:#777;border-radius:50%"></div>
<div class="a t" style="left:363.00px;top:142.47px;font-size:8.5px;line-height:8.5px;font-family:'Liberation Sans',sans-serif;color:#555;transform:scaleX(1.385);transform-origin:0 0;">Timely success</div></div></div>
<div class="a" style="left:15px;top:284.1px;width:520px;height:292.5px;transform:scale(0.20577);transform-origin:0 0"><div class="a thumb" style="left:0;top:0;width:520px;height:292.5px"><div class="a" style="left:0px;top:0px;width:520px;height:292.5px;background:#fff"></div>
<div class="a" style="left:17px;top:15px;width:487px;height:262px;border:3px solid #b9c6b9"></div>
<div class="a t" style="left:44.00px;top:44.74px;font-size:19px;line-height:19px;font-family:'Liberation Serif',serif;color:#333;transform:scaleX(1.152);transform-origin:0 0;">Financials</div>
<div class="a t" style="left:227.47px;top:100.48px;font-size:8.5px;line-height:8.5px;font-family:'Liberation Sans',sans-serif;color:#444;font-weight:bold;">Year 1</div>
<div class="a t" style="left:314.47px;top:100.48px;font-size:8.5px;line-height:8.5px;font-family:'Liberation Sans',sans-serif;color:#444;font-weight:bold;">Year 2</div>
<div class="a t" style="left:400.47px;top:100.48px;font-size:8.5px;line-height:8.5px;font-family:'Liberation Sans',sans-serif;color:#444;font-weight:bold;">Year 3</div>
<div class="a" style="left:39px;top:117px;width:441px;height:21px;background:#e4eae4"></div>
<div class="a" style="left:39px;top:160px;width:441px;height:21px;background:#e4eae4"></div>
<div class="a" style="left:39px;top:207px;width:441px;height:20px;background:#e4eae4"></div>
<div class="a t" style="left:44.00px;top:124.48px;font-size:8.5px;line-height:8.5px;font-family:'Liberation Sans',sans-serif;color:#555;">Costs</div>
<div class="a t" style="left:66.00px;top:146.47px;font-size:8.5px;line-height:8.5px;font-family:'Liberation Sans',sans-serif;color:#555;">Sales</div>
<div class="a t" style="left:227.00px;top:146.47px;font-size:8.5px;line-height:8.5px;font-family:'Liberation Sans',sans-serif;color:#555;">$5,000</div>
<div class="a t" style="left:311.64px;top:146.47px;font-size:8.5px;line-height:8.5px;font-family:'Liberation Sans',sans-serif;color:#555;">$80,000</div>
<div class="a t" style="left:391.73px;top:146.47px;font-size:8.5px;line-height:8.5px;font-family:'Liberation Sans',sans-serif;color:#555;">$1,000,000</div>
<div class="a t" style="left:66.00px;top:165.47px;font-size:8.5px;line-height:8.5px;font-family:'Liberation Sans',sans-serif;color:#555;">Ads</div>
<div class="a t" style="left:224.64px;top:165.47px;font-size:8.5px;line-height:8.5px;font-family:'Liberation Sans',sans-serif;color:#555;">$10,000</div>
<div class="a t" style="left:305.73px;top:165.47px;font-size:8.5px;line-height:8.5px;font-family:'Liberation Sans',sans-serif;color:#555;">$1,000,000</div>
<div class="a t" style="left:391.73px;top:165.47px;font-size:8.5px;line-height:8.5px;font-family:'Liberation Sans',sans-serif;color:#555;">$8,000,000</div>
<div class="a t" style="left:66.00px;top:187.47px;font-size:8.5px;line-height:8.5px;font-family:'Liberation Sans',sans-serif;color:#555;">Average cost per order</div>
<div class="a t" style="left:235.27px;top:187.47px;font-size:8.5px;line-height:8.5px;font-family:'Liberation Sans',sans-serif;color:#555;">75</div>
<div class="a t" style="left:322.27px;top:187.47px;font-size:8.5px;line-height:8.5px;font-family:'Liberation Sans',sans-serif;color:#555;">80</div>
<div class="a t" style="left:408.27px;top:187.47px;font-size:8.5px;line-height:8.5px;font-family:'Liberation Sans',sans-serif;color:#555;">90</div>
<div class="a t" style="left:66.00px;top:209.47px;font-size:8.5px;line-height:8.5px;font-family:'Liberation Sans',sans-serif;color:#555;">Revenue @ 10%</div>
<div class="a t" style="left:224.64px;top:209.47px;font-size:8.5px;line-height:8.5px;font-family:'Liberation Sans',sans-serif;color:#555;">$20,000</div>
<div class="a t" style="left:305.73px;top:209.47px;font-size:8.5px;line-height:8.5px;font-family:'Liberation Sans',sans-serif;color:#555;">$4,000,000</div>
<div class="a t" style="left:389.37px;top:209.47px;font-size:8.5px;line-height:8.5px;font-family:'Liberation Sans',sans-serif;color:#555;">$40,000,000</div>
<div class="a t" style="left:44.00px;top:231.47px;font-size:8.5px;line-height:8.5px;font-family:'Liberation Sans',sans-serif;color:#555;font-weight:bold;">Gross profit</div>
<div class="a t" style="left:224.64px;top:231.47px;font-size:8.5px;line-height:8.5px;font-family:'Liberation Sans',sans-serif;color:#555;font-weight:bold;">$10,000</div>
<div class="a t" style="left:305.73px;top:231.47px;font-size:8.5px;line-height:8.5px;font-family:'Liberation Sans',sans-serif;color:#555;font-weight:bold;">$8,000,000</div>
<div class="a t" style="left:389.37px;top:231.47px;font-size:8.5px;line-height:8.5px;font-family:'Liberation Sans',sans-serif;color:#555;font-weight:bold;">$90,000,000</div></div></div>
<div class="a" style="left:127.30000000000001px;top:196px;width:4.5px;height:103px;border:1px solid #dadada;background:#f4f4f4;border-radius:1px"></div>
<div class="a" style="left:128.6px;top:243.5px;width:2px;height:5px;background:repeating-linear-gradient(#c8c8c8 0 0.8px,transparent 0.8px 1.6px)"></div>
</div>
<div class="a t" style="left:26.00px;top:77.90px;font-size:8px;line-height:8px;font-family:'Liberation Sans',sans-serif;color:#1a1a1a;transform:scaleX(0.944);transform-origin:0 0;-webkit-text-stroke:0.25px #1a1a1a;">8</div>
<div class="a t" style="left:26.00px;top:149.20px;font-size:8px;line-height:8px;font-family:'Liberation Sans',sans-serif;color:#1a1a1a;transform:scaleX(0.966);transform-origin:0 0;-webkit-text-stroke:0.25px #1a1a1a;">9</div>
<div class="a t" style="left:24.80px;top:220.90px;font-size:8px;line-height:8px;font-family:'Liberation Sans',sans-serif;color:#1a1a1a;transform:scaleX(0.787);transform-origin:0 0;-webkit-text-stroke:0.25px #1a1a1a;">10</div>
<div class="a t" style="left:24.80px;top:292.10px;font-size:8px;line-height:8px;font-family:'Liberation Sans',sans-serif;color:#1a1a1a;transform:scaleX(0.747);transform-origin:0 0;-webkit-text-stroke:0.25px #1a1a1a;">11</div>
<div class="a t" style="left:24.80px;top:363.30px;font-size:8px;line-height:8px;font-family:'Liberation Sans',sans-serif;color:#1a1a1a;transform:scaleX(0.798);transform-origin:0 0;-webkit-text-stroke:0.25px #1a1a1a;">12</div>
<svg style="left:786px;top:90px;" width="8" height="8" viewBox="0 0 8 8"><rect x="0.6" y="0.6" width="6.8" height="6.8" rx="0.8" fill="#fff" stroke="#808080" stroke-width="1.2"/><path d="M0.6 1.6H7.4" stroke="#808080" stroke-width="1.2"/><rect x="2.3" y="3.5" width="3.4" height="2" fill="#e0e0e0"/></svg>
<svg style="left:786px;top:110.7px;" width="8" height="7" viewBox="0 0 8 7"><rect x="0.5" y="0.5" width="4" height="4" fill="none" stroke="#a8a8a8" stroke-width="0.8"/><circle cx="5" cy="4.5" r="2.5" fill="#f7f7f7" stroke="#a8a8a8" stroke-width="0.8"/></svg>
<svg style="left:786px;top:130px;" width="8" height="7.3" viewBox="0 0 8 7.3"><rect x="0.5" y="0.5" width="7" height="6.3" fill="none" stroke="#a8a8a8" stroke-width="0.8"/><path d="M0.8 5.3L3 3L4.7 4.5L7.3 2.3" fill="none" stroke="#a8a8a8" stroke-width="0.7"/></svg>
<div class="a t" style="left:787.50px;top:150.32px;font-size:7.5px;line-height:7.5px;font-family:'Liberation Sans',sans-serif;color:#a8a8a8;font-weight:bold;">¶</div>
<svg style="left:786px;top:170px;" width="8" height="6.5" viewBox="0 0 8 6.5"><rect x="0.5" y="0.5" width="7" height="5.5" fill="none" stroke="#a8a8a8" stroke-width="0.8"/><path d="M0.5 2.3H7.5M0.5 4.1H7.5M2.8 0.5V6M5.2 0.5V6" stroke="#a8a8a8" stroke-width="0.6"/></svg>
<svg style="left:786px;top:189.3px;" width="8" height="7.2" viewBox="0 0 8 7.2"><path d="M0.5 7V5M3 7V3.5M5.5 7V1.8 M7.5 7V0.5" stroke="#a8a8a8" stroke-width="0.9"/><path d="M0 7H8" stroke="#a8a8a8" stroke-width="0.6"/></svg>
<div class="a t" style="left:786.30px;top:210.67px;font-size:6.5px;line-height:6.5px;font-family:'Liberation Sans',sans-serif;color:#a8a8a8;transform:scaleX(1.020);transform-origin:0 0;">Ta</div>
<svg style="left:786.3px;top:215.5px;" width="7" height="2" viewBox="0 0 7 2"><path d="M0 0.5Q3.5 2 7 0.5" fill="none" stroke="#a8a8a8" stroke-width="0.6"/></svg>
<svg style="left:786px;top:228px;" width="8.5" height="8.5" viewBox="0 0 8.5 8.5"><path d="M0.5 8C2 4 4 2 3 0.5 M1 4C3 6 5 8 6.5 5 M4.5 5L8 2" fill="none" stroke="#a8a8a8" stroke-width="0.8"/></svg>
<div class="a" style="left:771.2px;top:78.9px;width:6.5px;height:6.7px;background:#fafafa;border:1px solid #dedede"></div>
<svg style="left:773.1px;top:81.5px;" width="2.6" height="1.6" viewBox="0 0 2.6 1.6"><path d="M0 1.6L1.3 0L2.6 1.6Z" fill="#888"/></svg>
<div class="a" style="left:771.5px;top:288px;width:6px;height:21.5px;background:#fafafa;border:1px solid #dedede;border-radius:1px"></div>
<div class="a" style="left:773.6px;top:295.5px;width:1.8px;height:5.5px;background:repeating-linear-gradient(#c4c4c4 0 0.9px,#e8e8e8 0.9px 1.5px)"></div>
<div class="a" style="left:771.7px;top:377.6px;width:6px;height:7px;background:#fafafa;border:1px solid #dedede"></div>
<svg style="left:773.4px;top:380.2px;" width="2.6" height="1.6" viewBox="0 0 2.6 1.6"><path d="M0 0L1.3 1.6L2.6 0Z" fill="#888"/></svg>
<div class="a t" style="left:166.25px;top:401.82px;font-size:7.5px;line-height:7.5px;font-family:'Liberation Sans',sans-serif;color:#444;transform:scaleX(1.002);transform-origin:0 0;">Click to add notes</div>
<div class="a" style="left:771.5px;top:395.6px;width:6px;height:6.5px;background:#fafafa;border:1px solid #dedede"></div>
<svg style="left:773.2px;top:398px;" width="2.6" height="1.6" viewBox="0 0 2.6 1.6"><path d="M0 1.6L1.3 0L2.6 1.6Z" fill="#888"/></svg>
<div class="a" style="left:771.5px;top:401.8px;width:6px;height:5.5px;background:#fafafa;border:1px solid #dedede"></div>
<div class="a" style="left:771.5px;top:407px;width:6px;height:7px;background:#fafafa;border:1px solid #dedede"></div>
<svg style="left:773.2px;top:409.5px;" width="2.6" height="1.6" viewBox="0 0 2.6 1.6"><path d="M0 0L1.3 1.6L2.6 0Z" fill="#888"/></svg>
<svg style="left:7.2px;top:418px;" width="6.6" height="6.5" viewBox="0 0 6.6 6.5"><rect x="0.5" y="0.5" width="5.6" height="5.5" fill="none" stroke="#555" stroke-width="0.9"/><path d="M2.2 1.8L4.6 3.25L2.2 4.7Z" fill="#222"/></svg>
<svg style="left:17.3px;top:420.3px;" width="3" height="1.8" viewBox="0 0 3 1.8"><path d="M0 0L1.5 1.8L3 0" fill="none" stroke="#999" stroke-width="0.7"/></svg>
<div class="a t" style="left:25.80px;top:418.66px;font-size:6.4px;line-height:6.4px;font-family:'Liberation Sans',sans-serif;color:#555;font-weight:bold;transform:scaleX(0.909);transform-origin:0 0;">Slide 10 of 13</div>
<div class="a t" style="left:573.00px;top:418.49px;font-size:6.6px;line-height:6.6px;font-family:'Liberation Sans',sans-serif;color:#b0b0b0;font-weight:bold;transform:scaleX(0.868);transform-origin:0 0;">English (United States)</div>
<svg style="left:639px;top:420.3px;" width="3" height="1.8" viewBox="0 0 3 1.8"><path d="M0 0L1.5 1.8L3 0" fill="none" stroke="#bbb" stroke-width="0.7"/></svg>
<svg style="left:646px;top:416.8px;" width="9" height="9" viewBox="0 0 9 9"><circle cx="4.5" cy="4.5" r="4" fill="none" stroke="#444" stroke-width="0.9"/><ellipse cx="4.5" cy="4.5" rx="1.9" ry="4" fill="none" stroke="#444" stroke-width="0.8"/><path d="M4.5 0.5V8.5M0.5 4.5H8.5" stroke="#444" stroke-width="0.7"/></svg>
<div class="a" style="left:660.7px;top:416px;width:10.5px;height:9.7px;background:#d2d2d2"></div>
<div class="a t" style="left:661.80px;top:418.09px;font-size:4.6px;line-height:4.6px;font-family:'Liberation Sans',sans-serif;color:#222;font-weight:bold;transform:scaleX(0.682);transform-origin:0 0;">ABC</div>
<svg style="left:664px;top:420.3px;" width="5.5" height="4" viewBox="0 0 5.5 4"><path d="M0.3 1.8L2 3.5L5.2 0.2" fill="none" stroke="#222" stroke-width="1.1"/></svg>
<div class="a" style="left:676.2px;top:416px;width:1px;height:10px;background:#dcdcdc"></div>
<div class="a" style="left:681.8px;top:416px;width:9.9px;height:9.7px;background:#d4d4d4"></div>
<svg style="left:682.8px;top:417px;" width="8" height="7.7" viewBox="0 0 8 7.7"><rect x="0.5" y="0.5" width="7" height="6.7" fill="none" stroke="#555" stroke-width="0.9"/><rect x="1.8" y="2" width="1.6" height="3.7" fill="none" stroke="#555" stroke-width="0.7"/><rect x="4.6" y="2" width="1.6" height="3.7" fill="none" stroke="#555" stroke-width="0.7"/></svg>
<svg style="left:697.7px;top:418px;" width="9.3" height="6" viewBox="0 0 9.3 6"><path d="M0.5 0V6M8.8 0V6M1.5 3H7.8M3 1.6L1.5 3L3 4.4M6.3 1.6L7.8 3L6.3 4.4" fill="none" stroke="#555" stroke-width="0.8"/></svg>
<div class="a" style="left:716px;top:420.6px;width:5px;height:0.9px;background:#777"></div>
<div class="a t" style="left:731.70px;top:418.66px;font-size:6.4px;line-height:6.4px;font-family:'Liberation Sans',sans-serif;color:#444;font-weight:bold;transform:scaleX(0.915);transform-origin:0 0;">Zoom 78%</div>
<svg style="left:771.5px;top:418px;" width="5.5" height="5.5" viewBox="0 0 5.5 5.5"><path d="M2.75 0V5.5M0 2.75H5.5" stroke="#666" stroke-width="0.9"/></svg>
<svg style="left:7px;top:432px;" width="14" height="14" viewBox="0 0 14 14"><circle cx="3.5" cy="1.5" r="0.9" fill="#fcfcfc"/><circle cx="1.7" cy="6.5" r="1.1" fill="#fcfcfc"/><circle cx="5.2" cy="11.3" r="1.4" fill="#fcfcfc"/><path d="M8.3 3.2L11.5 5.8L8.3 8.4" fill="none" stroke="#fcfcfc" stroke-width="1.7"/></svg>
<svg style="left:30.6px;top:431.6px;" width="17" height="14" viewBox="0 0 17 14"><rect x="0.5" y="0.5" width="16" height="10.5" fill="#2a8fb0"/><path d="M8 0.5H16.5V11H5Z" fill="#9b4f8b"/><rect x="0.5" y="0.5" width="16" height="10.5" fill="none" stroke="#d8dde2" stroke-width="0.8"/><rect x="6.5" y="3.5" width="5" height="4" fill="#f0f0f0" opacity=".85"/><path d="M5 13H12M8.5 11V13" stroke="#bfc5ca" stroke-width="1"/></svg>
<svg style="left:57.8px;top:432px;" width="15.7" height="13.3" viewBox="0 0 15.7 13.3"><path d="M0 1.2Q0 0.3 1 0.3H5.5L7 1.5H14.7Q15.7 1.5 15.7 2.5V13H0Z" fill="#2a7fbf"/><rect x="0.8" y="2.3" width="14.1" height="3.5" fill="#d8ecf8"/><path d="M0 4.8H15.7V13.3H0Z" fill="#3aa3e3"/><path d="M0 4.8H15.7V5.5H0Z" fill="#8fd0f4"/></svg>
<div class="a" style="left:79.7px;top:427px;width:26.3px;height:23px;background:#45484c"></div>
<div class="a" style="left:106px;top:427px;width:27.4px;height:23px;background:#33363a"></div>
<svg style="left:84.5px;top:430.5px;" width="17" height="17" viewBox="0 0 17 17"><defs><linearGradient id="ff1" x1=".8" y1="0" x2=".3" y2="1"><stop offset="0" stop-color="#ffe34f"/><stop offset=".35" stop-color="#ff9a1f"/><stop offset=".75" stop-color="#ff4a3a"/><stop offset="1" stop-color="#e5175d"/></linearGradient><radialGradient id="ff2" cx=".45" cy=".45" r=".6"><stop offset="0" stop-color="#9a5ef0"/><stop offset="1" stop-color="#5b2fc4"/></radialGradient></defs><path d="M8.5 16.5C4 16.5 1 13.2 1 9.3C1 7.5 1.6 5.8 2.6 4.6L3.6 6.3C4 4.6 5 3.4 6.2 3.2C6 4 6.3 4.8 7 5.2C8.5 4.4 10.5 4.8 11.5 6C11.5 4 10.8 2 9.5 0.5C13.5 1.8 16 5.2 16 9.3C16 13.2 12.8 16.5 8.5 16.5Z" fill="url(#ff1)"/><circle cx="8.8" cy="9.5" r="3.3" fill="url(#ff2)"/><path d="M4.2 8.5C4.8 6.8 6.3 6 7.8 6.1" fill="none" stroke="#ffb01f" stroke-width="1.1"/></svg>
<svg style="left:113px;top:431.5px;" width="15" height="15" viewBox="0 0 15 15"><circle cx="7.5" cy="7.5" r="7.2" fill="#1e9be8"/><path d="M3 5.5H12M7.5 5.5L4.5 11M7.5 5.5L10.5 11M7 8.5L11 4" stroke="#fff" stroke-width="1.2" fill="none"/></svg>
<svg style="left:138px;top:431.5px;" width="16" height="15" viewBox="0 0 16 15"><path d="M5 4V2.5Q5 0.5 8 0.5Q11 0.5 11 2.5V4" fill="none" stroke="#3aa0e8" stroke-width="1"/><rect x="1" y="4" width="14" height="11" rx="1" fill="#1f8de0"/><path d="M6.5 7L10 9.5L6.5 12Z" fill="#cfe8fb"/></svg>
<svg style="left:166px;top:431.5px;" width="16" height="14.5" viewBox="0 0 16 14.5"><rect x="0" y="0" width="16" height="14.5" fill="#3b4046"/><path d="M0 14.5V6L3 2.5L6 6.5L9 7.5L12 10L14 7L16 9V14.5Z" fill="#57b380"/></svg>
<svg style="left:193.4px;top:431.5px;" width="15" height="14" viewBox="0 0 15 14"><rect x="0" y="0" width="15" height="14" fill="#31363b"/><path d="M2 5H13M2 9.5H13" stroke="#cfd3d6" stroke-width="1"/><rect x="9" y="3.5" width="2.5" height="3" fill="#eff0f1"/><rect x="4" y="8" width="2.5" height="3" fill="#eff0f1"/></svg>
<div class="a" style="left:215.3px;top:427px;width:26px;height:23px;background:#46494d"></div>
<svg style="left:221.4px;top:431.5px;" width="14" height="14.5" viewBox="0 0 14 14.5"><rect x="0" y="0" width="14" height="14.5" fill="#31363b"/><path d="M5.5 4.5L8.5 7.25L5.5 10" fill="none" stroke="#c9cdd0" stroke-width="1"/></svg>
<div class="a" style="left:242px;top:427px;width:26.7px;height:23px;background:#31658a"></div>
<div class="a" style="left:242px;top:427px;width:26.7px;height:1px;background:#5fbdf0"></div>
<svg style="left:246.8px;top:430.5px;" width="17.5" height="17" viewBox="0 0 17.5 17"><path d="M8.75 9.2L17 12.5L8.75 16.5L0.5 12.5Z" fill="#f47a44"/><path d="M8.75 5.2L17 8.6L8.75 12.5L0.5 8.6Z" fill="#8cc63f"/><path d="M0.5 8.6L8.75 12.5L17 8.6V9.6L8.75 13.5L0.5 9.6Z" fill="#6fa02f" opacity=".6"/><path d="M8.75 0.8L17 4.5L8.75 8.3L0.5 4.5Z" fill="#5ec4ef"/></svg>
<svg style="left:656px;top:434.4px;" width="9.6" height="8.6" viewBox="0 0 9.6 8.6"><path d="M1 4A3.8 3.8 0 0 1 8 2.3 M8.6 4.6A3.8 3.8 0 0 1 1.6 6.3" fill="none" stroke="#e6e7e8" stroke-width="1"/><path d="M8.6 0.3V2.8H6.2M1 8.3V5.8H3.4" fill="none" stroke="#e6e7e8" stroke-width="1"/></svg>
<svg style="left:673px;top:434.4px;" width="8" height="8.8" viewBox="0 0 8 8.8"><rect x="0.5" y="1" width="7" height="7.3" fill="none" stroke="#e6e7e8" stroke-width="1"/><rect x="2" y="0" width="4" height="2" fill="#e6e7e8"/><path d="M2 4H6M2 6H5" stroke="#e6e7e8" stroke-width="0.8"/></svg>
<svg style="left:688px;top:434.5px;" width="9" height="8.5" viewBox="0 0 9 8.5"><path d="M0.5 2.8H2.5L5.3 0.3V8.2L2.5 5.7H0.5Z" fill="#e6e7e8"/><path d="M6.5 2.3A2.5 2.5 0 0 1 6.5 6.2M7.5 1A4 4 0 0 1 7.5 7.5" fill="none" stroke="#e6e7e8" stroke-width="0.8"/></svg>
<svg style="left:704px;top:434.4px;" width="8.4" height="8.6" viewBox="0 0 8.4 8.6"><circle cx="4.2" cy="4.3" r="2.1" fill="none" stroke="#e6e7e8" stroke-width="1"/><path d="M4.2 0V1.2M4.2 7.4V8.6M0 4.3H1.2M7.2 4.3H8.4M1.2 1.3L2 2.1M6.4 6.5L7.2 7.3M1.2 7.3L2 6.5M6.4 2.1L7.2 1.3" stroke="#e6e7e8" stroke-width="0.8"/></svg>
<svg style="left:718px;top:434.4px;" width="11.6" height="9" viewBox="0 0 11.6 9"><path d="M0.5 3.2A7.8 7.8 0 0 1 11.1 3.2M2.3 5A5.3 5.3 0 0 1 9.3 5M4 6.8A2.8 2.8 0 0 1 7.6 6.8" fill="none" stroke="#e6e7e8" stroke-width="1"/><circle cx="5.8" cy="8.3" r="0.8" fill="#e6e7e8"/></svg>
<svg style="left:734px;top:435.5px;" width="9" height="5.5" viewBox="0 0 9 5.5"><path d="M0.5 5L4.5 0.8L8.5 5" fill="none" stroke="#e6e7e8" stroke-width="1"/></svg>
<div class="a t" style="left:749.00px;top:433.27px;font-size:12.5px;line-height:12.5px;font-family:'Liberation Sans',sans-serif;color:#eff0f1;transform:scaleX(0.799);transform-origin:0 0;">13:40</div>
<svg style="left:783px;top:434px;" width="9.5" height="10" viewBox="0 0 9.5 10"><rect x="0.5" y="0.5" width="8.5" height="8.5" fill="none" stroke="#e6e7e8" stroke-width="1"/><path d="M0 9.5H9.5" stroke="#e6e7e8" stroke-width="1"/></svg>
</div></body></html>
